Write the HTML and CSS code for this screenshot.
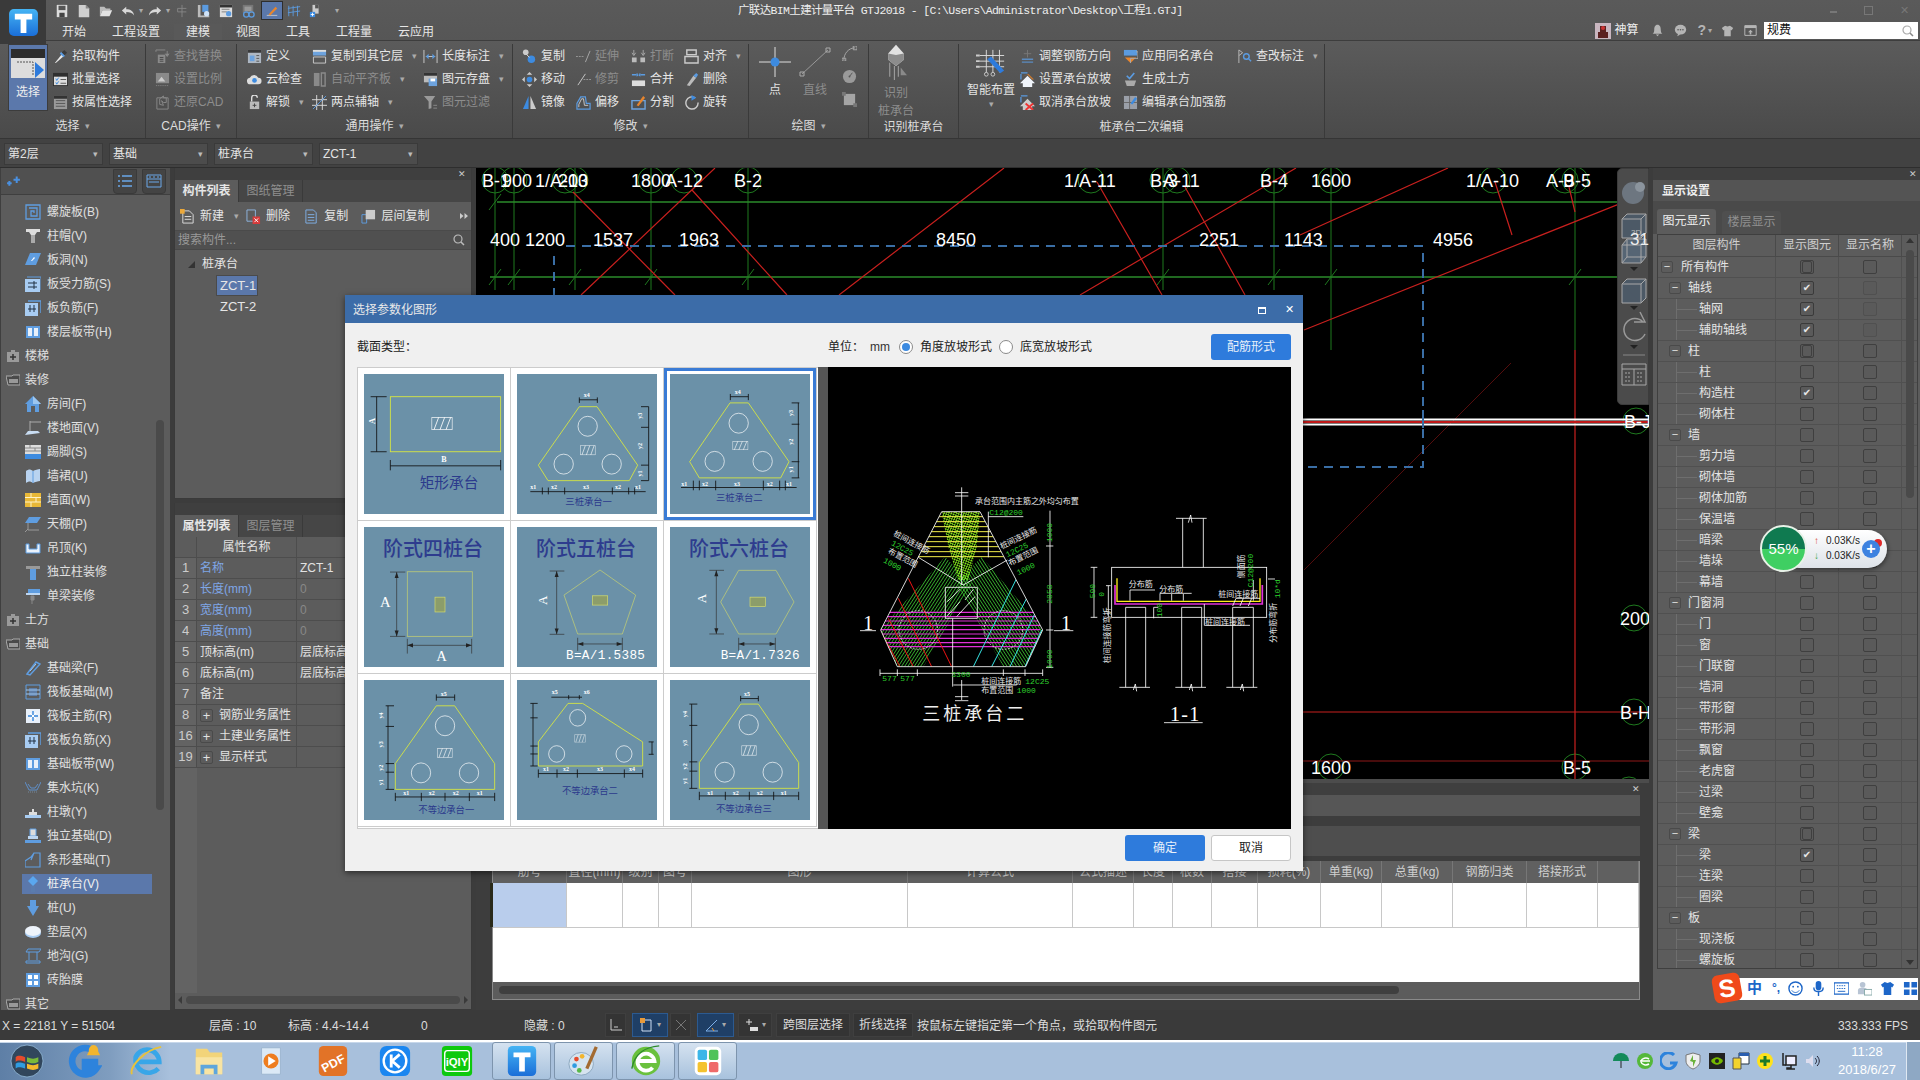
FILE: index.html
```html
<!DOCTYPE html>
<html lang="zh-CN">
<head>
<meta charset="utf-8">
<title>广联达BIM土建计量平台 GTJ2018</title>
<link rel="stylesheet" href="styles.css">
</head>
<body>
<svg class="sprite" aria-hidden="true">
<defs>
<pattern id="pgreen" width="8" height="8" patternUnits="userSpaceOnUse" patternTransform="rotate(33)"><path d="M0 0V8" stroke="#46e03a" stroke-width="4"/></pattern>
<pattern id="pgreen2" width="8" height="8" patternUnits="userSpaceOnUse" patternTransform="rotate(-33)"><path d="M0 0V8" stroke="#46e03a" stroke-width="4"/></pattern>
<pattern id="plime" width="7" height="7" patternUnits="userSpaceOnUse" patternTransform="rotate(20)"><path d="M0 0V7M0 0H7" stroke="#8dff1c" stroke-width="3.500"/></pattern>
<clipPath id="hexclip"><path d="M245 125H360L548 480 497 590H112L62 480Z"/></clipPath>
<linearGradient id="gq" x1="0" y1="0" x2="0" y2="1"><stop offset="0" stop-color="#45b4f4"/><stop offset="1" stop-color="#1a6ed8"/></linearGradient>
</defs>
<symbol id="hr" viewBox="0 0 64 38" preserveAspectRatio="none"><path d="M1 1H63V37H1ZM8 37L22 1M26 37L40 1M44 37L58 1" fill="none" stroke="#fff" stroke-width="2.5"/></symbol>
<!-- quick access -->
<symbol id="q-save" viewBox="0 0 16 16"><path d="M2 1H14V15H2Z" fill="#ddd"/><path d="M4 2H12V7H4Z" fill="#555"/><path d="M5 10H11V15H5Z" fill="#444"/></symbol>
<symbol id="q-new" viewBox="0 0 16 16"><path d="M2 1H10L14 5V15H2Z" fill="#cfcfcf"/><path d="M10 1V5H14Z" fill="#888"/></symbol>
<symbol id="q-open" viewBox="0 0 16 16"><path d="M1 3H6L8 5H13V7H4L1 14Z" fill="#bbb"/><path d="M4 7H15L12 14H1Z" fill="#e2e2e2"/></symbol>
<symbol id="q-undo" viewBox="0 0 16 16"><path d="M6 3V6C11 6 14 8 15 13 13 10 10 9 6 9V12L1 7.500Z" fill="#d8d8d8"/></symbol>
<symbol id="q-redo" viewBox="0 0 16 16"><path d="M10 3V6C5 6 2 8 1 13 3 10 6 9 10 9V12L15 7.500Z" fill="#d8d8d8"/></symbol>
<symbol id="q-tree" viewBox="0 0 16 16"><path d="M8 1V15M3 5H13M3 5V9H13" fill="none" stroke="#888"/></symbol>
<symbol id="q-a" viewBox="0 0 16 16"><path d="M1 1H4V13H14V15H1Z" fill="#bbb"/><path d="M6 1H13V9H6Z" fill="#5b9be0"/><circle cx="11" cy="11" r="3" fill="#cfe2f7"/></symbol>
<symbol id="q-b" viewBox="0 0 16 16"><path d="M1 1H15V15H1Z" fill="#ddd"/><path d="M1 1H15V4H1Z" fill="#333"/><path d="M3 6H12M3 9H9" stroke="#777"/><circle cx="11" cy="11" r="3" fill="#5b9be0"/></symbol>
<symbol id="q-c" viewBox="0 0 16 16"><path d="M2 1H14V10H2Z" fill="#777"/><path d="M4 3H12V8H4Z" fill="#999"/><circle cx="6" cy="12" r="3" fill="none" stroke="#5b9be0" stroke-width="1.500"/><circle cx="12" cy="12" r="3" fill="none" stroke="#5b9be0" stroke-width="1.500"/></symbol>
<symbol id="q-d" viewBox="0 0 16 16"><path d="M2 13H14" stroke="#ccc"/><path d="M4 12L12 3 14 5 6 13Z" fill="#e8852d"/></symbol>
<symbol id="q-e" viewBox="0 0 16 16"><path d="M2 2V14M7 2V14M12 2V14M1 5L15 3M1 10L15 8" fill="none" stroke="#5b9be0"/></symbol>
<symbol id="q-f" viewBox="0 0 16 16"><path d="M4 1H11V11H4Z" fill="#ccc"/><path d="M7 1H11V5H7Z" fill="#555"/><path d="M1 9H7V15H1Z" fill="#3d8be0"/><path d="M4 10V14M2 12H6" stroke="#fff"/></symbol>
<!-- ribbon -->
<symbol id="r-pick" viewBox="0 0 16 16"><path d="M2 15L9 6 11 8 3 15Z" fill="#e8e8e8"/><path d="M9 4L12 1 15 4 12 7Z" fill="#3b3b3b"/><path d="M8 4L12 8" stroke="#5b9be0" stroke-width="2"/></symbol>
<symbol id="r-batch" viewBox="0 0 16 16"><path d="M0 1H16V15H0Z" fill="#2f2f2f"/><path d="M1 5H15V14H1Z" fill="#ddd"/><path d="M3 7L4 9 6 6M3 11L4 13 6 10" fill="none" stroke="#3d8be0"/><path d="M8 8H14M8 12H14" stroke="#555"/></symbol>
<symbol id="r-prop" viewBox="0 0 16 16"><path d="M1 1H15V15H1Z" fill="#9a9a9a"/><path d="M1 1H15V4H1Z" fill="#333"/><path d="M3 6H13M3 9H13M3 12H13" stroke="#555"/></symbol>
<symbol id="r-find" viewBox="0 0 16 16"><path d="M3 6H11V15H3Z" fill="#8a8a8a"/><path d="M5 9H9M5 11H9M5 13H9" stroke="#444"/><path d="M1 3V1H11" fill="none" stroke="#8a8a8a"/><path d="M13 2V6M11 5L13 8 15 5" fill="#8a8a8a" stroke="#8a8a8a"/></symbol>
<symbol id="r-scale" viewBox="0 0 16 16"><path d="M1 1H15V12H1Z" fill="#8a8a8a"/><path d="M3 10L7 5 11 10Z" fill="#ccc"/><path d="M1 14.500H15" stroke="#8a8a8a" stroke-dasharray="1 1"/></symbol>
<symbol id="r-cad" viewBox="0 0 16 16"><path d="M2 3H14V15H2Z" fill="none" stroke="#8a8a8a"/><path d="M5 4L9 1V3H12V8H9L7 6 9 11 5 10Z" fill="none" stroke="#8a8a8a"/></symbol>
<symbol id="r-def" viewBox="0 0 16 16"><path d="M1 1H15V15H1Z" fill="#aeb7c2"/><path d="M1 1H15V4H1Z" fill="#3a3a3a"/><path d="M3 7H8V13H3Z" fill="#6da3de"/><path d="M10 7H13M10 10H13M10 13H13" stroke="#555"/></symbol>
<symbol id="r-cloud" viewBox="0 0 16 16"><path d="M4 13A3.500 3.500 0 0 1 3 6 5 5 0 0 1 12 6 3.500 3.500 0 0 1 12 13Z" fill="#ddd"/><circle cx="8" cy="9" r="2.500" fill="#3d8be0"/></symbol>
<symbol id="r-lock" viewBox="0 0 16 16"><path d="M3 7H13V15H3Z" fill="#bbb"/><path d="M5 7V3A3 3 0 0 1 11 3" fill="none" stroke="#ddd" stroke-width="1.500"/><path d="M8 9V13M6 11H10" stroke="#444"/></symbol>
<symbol id="r-copylayer" viewBox="0 0 16 16"><path d="M1 1H15V7H1Z" fill="#6da3de"/><path d="M1 1H15V3H1Z" fill="#ddd"/><path d="M1.500 8.500H14.500V15H1.500Z" fill="none" stroke="#ccc"/></symbol>
<symbol id="r-auto" viewBox="0 0 16 16"><path d="M2 1H8V15H2Z" fill="#8a8a8a"/><path d="M10 1H14V15H10Z" fill="none" stroke="#8a8a8a" stroke-width="1.500"/></symbol>
<symbol id="r-axis" viewBox="0 0 16 16"><path d="M0 5H16M0 11H16M5 0V16M11 0V16" stroke="#ddd"/><path d="M1 15L15 1" stroke="#5b9be0"/></symbol>
<symbol id="r-len" viewBox="0 0 16 16"><path d="M1 1V15M15 1V15M3 8H13" stroke="#ccc"/><path d="M3 8L6 5V11ZM13 8L10 5V11Z" fill="#5b9be0"/></symbol>
<symbol id="r-store" viewBox="0 0 16 16"><path d="M1 1H15V11H1Z" fill="#bbb"/><path d="M1 1H15V4H1Z" fill="#333"/><path d="M6 7H15V15H6Z" fill="#6da3de"/><path d="M8 7H13V10H8Z" fill="#fff"/></symbol>
<symbol id="r-filter" viewBox="0 0 16 16"><path d="M1 1H13L9 7V14L6 15V7Z" fill="#9a9a9a"/><path d="M11 11H15M11 14H15" stroke="#8a8a8a"/></symbol>
<symbol id="r-copy" viewBox="0 0 16 16"><circle cx="4" cy="3.500" r="3" fill="#ccc"/><circle cx="10" cy="11" r="4" fill="#3d8be0"/><path d="M5 6L8 9" stroke="#ddd"/></symbol>
<symbol id="r-move" viewBox="0 0 16 16"><path d="M8 0L11 3H5ZM8 16L5 13H11ZM0 8L3 5V11ZM16 8L13 11V5Z" fill="#ccc"/><circle cx="8" cy="8" r="3" fill="#3d8be0"/></symbol>
<symbol id="r-mirror" viewBox="0 0 16 16"><path d="M1 15L7 1V15Z" fill="#3d8be0"/><path d="M9 1L15 15H9Z" fill="#ccc"/></symbol>
<symbol id="r-ext" viewBox="0 0 16 16"><path d="M0 8H8" stroke="#999" stroke-dasharray="2 1"/><path d="M10 14L15 2" stroke="#aaa"/></symbol>
<symbol id="r-trim" viewBox="0 0 16 16"><path d="M8 8H16" stroke="#999" stroke-dasharray="2 1"/><path d="M2 14L10 2" stroke="#ccc"/></symbol>
<symbol id="r-off" viewBox="0 0 16 16"><path d="M1 15V9L5 2H10L11 9H15V15Z" fill="none" stroke="#5b9be0" stroke-width="1.300"/><path d="M3 13V10L6 4H8L9 11H13" fill="none" stroke="#ccc"/></symbol>
<symbol id="r-brk" viewBox="0 0 16 16"><path d="M1 9H6V14H1ZM10 9H15V14H10Z" fill="#bbb"/><path d="M3 1V6M1 4L3 7 5 4M13 1V6M11 4L13 7 15 4" fill="none" stroke="#aaa"/></symbol>
<symbol id="r-mrg" viewBox="0 0 16 16"><path d="M1 9H15V15H1Z" fill="#ddd"/><path d="M1 3H6M10 3H15" stroke="#5b9be0" stroke-width="1.500"/><path d="M6 1L9 3 6 5ZM10 1L7 3 10 5Z" fill="#5b9be0"/></symbol>
<symbol id="r-spl" viewBox="0 0 16 16"><path d="M1 6H15V15H1Z" fill="none" stroke="#6da3de" stroke-width="1.500"/><path d="M6 11L13 1 15 3 8 12Z" fill="#e8852d"/></symbol>
<symbol id="r-aln" viewBox="0 0 16 16"><path d="M3 1H13V6H3ZM1 8H15V15H1Z" fill="none" stroke="#ccc" stroke-width="1.500"/></symbol>
<symbol id="r-del" viewBox="0 0 16 16"><path d="M3 14L10 4 13 6 6 15Z" fill="#bbb"/><path d="M10 4L13 1 15 3 13 6Z" fill="#5b9be0"/></symbol>
<symbol id="r-rot" viewBox="0 0 16 16"><path d="M12 3A6.500 6.500 0 1 0 15 8" fill="none" stroke="#ccc" stroke-width="1.500"/><path d="M8 0L13 3 8 6Z" fill="#3d8be0"/></symbol>
<symbol id="r-pt" viewBox="0 0 32 30"><path d="M16 0V30M0 15H32" stroke="#ddd"/><circle cx="16" cy="15" r="4.500" fill="#3d8be0"/></symbol>
<symbol id="r-line" viewBox="0 0 32 30"><path d="M3 27L29 3" stroke="#999"/><path d="M1 25H5V29H1ZM27 1H31V5H27Z" fill="none" stroke="#aaa"/></symbol>
<symbol id="r-arc" viewBox="0 0 16 16"><path d="M2 15C2 8 7 2 14 2" fill="none" stroke="#aaa"/><path d="M12 0H16V4H12ZM0 13H4V16H0Z" fill="none" stroke="#aaa"/></symbol>
<symbol id="r-clk" viewBox="0 0 16 16"><circle cx="8" cy="8" r="7" fill="#9a9a9a"/><path d="M8 8L11 4" stroke="#555"/><circle cx="8" cy="8" r="1" fill="#555"/></symbol>
<symbol id="r-box" viewBox="0 0 16 16"><path d="M2 2H14V14H2Z" fill="#a5a5a5"/><path d="M0 0H4V4H0ZM12 12H16V16H12Z" fill="#777"/></symbol>
<symbol id="r-id" viewBox="0 0 32 46"><path d="M16 1L26 12V20L16 28 6 20V12Z" fill="#e2e2e2"/><path d="M6 20L16 28V14L6 12ZM16 14V28L26 20V12Z" fill="#8c8c8c"/><path d="M8 24V42M14 28V46M19 28V42" stroke="#9a9a9a" stroke-width="1.500"/><path d="M22 30L30 40H22Z" fill="#8a8a8a"/></symbol>
<symbol id="r-smart" viewBox="0 0 32 32"><path d="M4 8H30M4 14H30M4 20H30M11 2V26M18 2V26M25 2V26" stroke="#ddd"/><path d="M0 8H4M0 14H4M0 20H4" stroke="#ccc" stroke-width="2"/><path d="M12 12L26 27 30 24 16 9Z" fill="#2e7bdc"/><circle cx="11" cy="28" r="2" fill="none" stroke="#ccc"/><circle cx="18" cy="28" r="2" fill="none" stroke="#ccc"/></symbol>
<symbol id="z-adj" viewBox="0 0 16 16"><path d="M8 1V9M4 5H12" stroke="#777"/><path d="M2 11H14M2 14H14" stroke="#5b8bc0" stroke-width="1.500"/></symbol>
<symbol id="z-set" viewBox="0 0 16 16"><path d="M1 2V8M1 1H8" stroke="#5b9be0" stroke-width="1.300"/><path d="M2 5L9 2 15 8H13L8 3Z" fill="#c9792f"/><path d="M8 4L16 12H13V16H3V12H0Z" fill="#f0f4fa"/></symbol>
<symbol id="z-can" viewBox="0 0 16 16"><path d="M1 2V8M1 1H8" stroke="#5b9be0" stroke-width="1.300"/><path d="M8 4L16 12H13V16H3V12H0Z" fill="#ccc"/><path d="M6 9L14 16M14 9L6 16" stroke="#e33" stroke-width="2"/></symbol>
<symbol id="z-app" viewBox="0 0 16 16"><path d="M1 1H15V7H1Z" fill="#5b9be0"/><path d="M2 9H14L8 15Z" fill="#e8852d"/><path d="M14 3H16V10H8V15" fill="none" stroke="#aaa"/></symbol>
<symbol id="z-earth" viewBox="0 0 16 16"><path d="M2 9H14L12 15H4Z" fill="#aaa"/><path d="M4 4L7 7 12 1" fill="none" stroke="#5b9be0" stroke-width="1.800"/></symbol>
<symbol id="z-edit" viewBox="0 0 16 16"><path d="M1 1H15V15H1Z" fill="#9a9fa8"/><path d="M7 1V15M1 8H15" stroke="#666"/><path d="M8 9L13 2 15 4 10 10Z" fill="#3d8be0"/></symbol>
<symbol id="z-chk" viewBox="0 0 16 16"><path d="M2 1V15M2 1L6 4 2 7" fill="none" stroke="#bbb"/><circle cx="10" cy="8" r="3" fill="none" stroke="#5b9be0" stroke-width="1.500"/><path d="M12 10L15 13" stroke="#5b9be0" stroke-width="1.500"/></symbol>
<!-- nav -->
<symbol id="n-spi" viewBox="0 0 16 16"><path d="M1 1H15V15H1ZM4 4H12V12H6V7H9V9" fill="none" stroke="#5f9de0" stroke-width="1.300"/></symbol>
<symbol id="n-cap" viewBox="0 0 16 16"><path d="M1 1H15V4H12L10 7H6L4 4H1Z" fill="#ddd"/><path d="M6 7H10V15H6Z" fill="#aaa"/></symbol>
<symbol id="n-hole" viewBox="0 0 16 16"><path d="M5 1H16L11 13H0Z" fill="#5f9de0"/><path d="M6 9L9 5 10 6 7 9Z" fill="#fff"/></symbol>
<symbol id="n-reb" viewBox="0 0 16 16"><path d="M0 3H15V16H0Z" fill="#a8ccf2"/><path d="M2 1H16V14" fill="none" stroke="#5f9de0"/><path d="M3 7H12M3 11H12M9 5V13" stroke="#234"/></symbol>
<symbol id="n-neg" viewBox="0 0 16 16"><path d="M0 3H13V16H0Z" fill="#a8ccf2"/><path d="M3 1H16V13" fill="none" stroke="#5f9de0" stroke-width="1.500"/><path d="M3 9H11M5 5V12M9 5V12" stroke="#234"/></symbol>
<symbol id="n-str" viewBox="0 0 16 16"><path d="M1 2H15V14H1Z" fill="#5f9de0"/><path d="M3 4H7V12H3ZM9 4H13V12H9Z" fill="#e8f0fa"/></symbol>
<symbol id="n-fc" viewBox="0 0 14 14"><path d="M1 3H5V1H9V3H13V13H1Z" fill="#9a9a9a"/><path d="M7 5V11M4 8H10" stroke="#333" stroke-width="1.500"/></symbol>
<symbol id="n-fo" viewBox="0 0 14 14"><path d="M0 3H6L7 2H14V12H2Z" fill="#4a4a4a" stroke="#aaa"/><path d="M3 6H12V10H3Z" fill="#999"/></symbol>
<symbol id="n-home" viewBox="0 0 16 16"><path d="M8 0L16 8H14V16H10V10H6V16H2V8H0Z" fill="#5f9de0"/><path d="M8 0L16 8H8Z" fill="#9cc6f0"/></symbol>
<symbol id="n-flr" viewBox="0 0 16 16"><path d="M5 1V12M5 2H16" stroke="#aaa"/><path d="M3 11H13L15 13 0 15Z" fill="#c8dcf2"/></symbol>
<symbol id="n-skt" viewBox="0 0 16 16"><path d="M0 1H16V10H0Z" fill="#ddd"/><path d="M0 4H16M0 7H16M5 1V4M10 4V7" stroke="#888"/><path d="M0 10H16V15H0Z" fill="#3d8be0"/></symbol>
<symbol id="n-cur" viewBox="0 0 16 16"><path d="M1 3C4 1 5 1 8 3 10 2 13 1 15 1V13C13 13 10 14 8 15 5 13 4 13 1 15Z" fill="#b9d3f0"/><path d="M8 3V15" stroke="#5f9de0"/></symbol>
<symbol id="n-wal" viewBox="0 0 16 16"><path d="M0 1H16V15H0Z" fill="#e8b838"/><path d="M0 5.500H16M0 10H16M6 1V5.500M11 5.500V10M6 10V15" stroke="#fff3c8"/></symbol>
<symbol id="n-cei" viewBox="0 0 16 16"><path d="M4 1H16L12 7H0Z" fill="#5f9de0"/><path d="M3 7V14H14M3 13L0 16" fill="none" stroke="#999"/></symbol>
<symbol id="n-sus" viewBox="0 0 16 16"><path d="M1 4H4V9H12V4H15V13H1Z" fill="#eaf2fb" stroke="#5f9de0"/></symbol>
<symbol id="n-col" viewBox="0 0 16 16"><path d="M1 2H15V5H1Z" fill="#999"/><path d="M5 5H11V16H5Z" fill="#5f9de0"/></symbol>
<symbol id="n-bem" viewBox="0 0 16 16"><path d="M3 1H15V5H3Z" fill="#5f9de0"/><path d="M1 5H15V7H1Z" fill="#bcd6f2"/><path d="M6 8H9V12H6ZM7 12V16" fill="#888" stroke="#888"/></symbol>
<symbol id="n-fbe" viewBox="0 0 16 16"><path d="M2 14L11 2 15 4 5 15Z" fill="none" stroke="#5f9de0" stroke-width="1.500"/><path d="M5 11L11 4" stroke="#a8ccf2"/></symbol>
<symbol id="n-raf" viewBox="0 0 16 16"><path d="M1 1H15V15H1Z" fill="none" stroke="#5f9de0"/><path d="M4 4H12V12H4Z" fill="#5f7fa8"/><path d="M1 6H15M1 10H15" stroke="#9cc6f0"/></symbol>
<symbol id="n-rmn" viewBox="0 0 16 16"><path d="M1 1H15V15H1Z" fill="#e8f0fa"/><path d="M8 3V13M3 8H13" stroke="#5f9de0" stroke-width="1.800"/><path d="M5 5L11 11M11 5L5 11" stroke="#fff"/></symbol>
<symbol id="n-pit" viewBox="0 0 16 16"><path d="M0 2L4 10 12 10 16 2M3 4L6 8H10L13 4" fill="none" stroke="#5f8fc8"/><path d="M3 12H13" stroke="#789" stroke-dasharray="1 1"/></symbol>
<symbol id="n-ped" viewBox="0 0 16 16"><path d="M0 11H16V14H0Z" fill="#a8ccf2"/><path d="M4 8H12V11H4ZM7 5H9V8H7Z" fill="#ddd"/></symbol>
<symbol id="n-ind" viewBox="0 0 16 16"><path d="M5 1H11V8H5Z" fill="#ddd" stroke="#5f9de0"/><path d="M3 8H13V11H3Z" fill="#bcd6f2"/><path d="M0 12H16V15H0Z" fill="#5f9de0"/></symbol>
<symbol id="n-strp" viewBox="0 0 16 16"><path d="M0 15V9L6 5 9 1H15V15ZM9 1L6 8" fill="none" stroke="#5f9de0" stroke-width="1.200"/></symbol>
<symbol id="n-cap2" viewBox="0 0 16 16"><path d="M8 0L13 5 8 10 3 5Z" fill="#5aa7ef"/><path d="M6 10H10V16H6Z" fill="#5a7cae"/></symbol>
<symbol id="n-pile" viewBox="0 0 16 16"><path d="M5 0H11V6H14L8 16 2 6H5Z" fill="#5f9de0"/></symbol>
<symbol id="n-pad" viewBox="0 0 16 16"><ellipse cx="8" cy="9" rx="8" ry="5" fill="#a8ccf2"/><ellipse cx="8" cy="7" rx="8" ry="5" fill="#eef4fb"/></symbol>
<symbol id="n-dit" viewBox="0 0 16 16"><path d="M3 1H16L14 4H1ZM4 4V12M12 4V12M1 13H15V15H1Z" fill="none" stroke="#5f9de0"/></symbol>
<symbol id="n-bri" viewBox="0 0 16 16"><path d="M1 1H15V15H1Z" fill="#5f9de0"/><path d="M3 3H7V7H3ZM9 3H13V7H9ZM3 9H7V13H3ZM9 9H13V13H9Z" fill="#fff"/></symbol>
<!-- taskbar -->
<symbol id="t-win" viewBox="0 0 36 36"><circle cx="18" cy="18" r="17" fill="#31465c" stroke="#8bb0d0"/><path d="M6 14C8 12 11 12 16 14V19C11 17 8 17 6 19Z" fill="#e54b2c"/><path d="M18 14C23 16 26 16 30 14V19C26 21 23 21 18 19Z" fill="#7ab93a"/><path d="M6 21C8 19 11 19 16 21V26C11 24 8 24 6 26Z" fill="#2f9ce0"/><path d="M18 21C23 23 26 23 30 21V26C26 28 23 28 18 26Z" fill="#f4b92c"/></symbol>
<symbol id="t-q" viewBox="0 0 36 36"><path d="M28 8A14 14 0 1 0 30 26H18V19H32" fill="none" stroke="#2d83dc" stroke-width="7"/><path d="M27 1A5 6 0 0 1 32 8L34 12H20L22 8A5 6 0 0 1 27 1Z" fill="#f2b52e"/></symbol>
<symbol id="t-ie" viewBox="0 0 36 36"><path d="M5 19H31A13 13 0 0 0 6 14 14 14 0 0 0 30 26" fill="none" stroke="#38a6e8" stroke-width="5"/><path d="M2 32C-1 24 16 6 33 3" fill="none" stroke="#e8c23a" stroke-width="2"/></symbol>
<symbol id="t-fo" viewBox="0 0 36 36"><path d="M4 5H16L19 9H32V32H4Z" fill="#f2d47a"/><path d="M4 14H32V32H4Z" fill="#f8e4a3"/><path d="M9 22H27V32H23V26H13V32H9Z" fill="#5ea6dc"/></symbol>
<symbol id="t-pl" viewBox="0 0 36 36"><path d="M8 4H28V32H8Z" fill="#dbe9f6" stroke="#9cb6d0"/><circle cx="18" cy="18" r="8" fill="#ee7d1f"/><path d="M15 13L23 18 15 23Z" fill="#fff"/></symbol>
<symbol id="t-pdf" viewBox="0 0 36 36"><rect x="3" y="2" width="30" height="32" rx="5" fill="#e27327"/><text x="18" y="25" class="tpdf" transform="rotate(-28 18 20)">PDF</text></symbol>
<symbol id="t-k" viewBox="0 0 36 36"><rect x="2" y="2" width="32" height="32" rx="7" fill="#1a86f0"/><circle cx="18" cy="18" r="12" fill="none" stroke="#fff" stroke-width="2.500"/><path d="M14 11V25M23 11L15 18 23 25" fill="none" stroke="#fff" stroke-width="3"/></symbol>
<symbol id="t-iq" viewBox="0 0 36 36"><rect x="2" y="2" width="32" height="32" rx="4" fill="#0ec90e"/><rect x="5" y="7" width="26" height="22" rx="3" fill="none" stroke="#fff" stroke-width="1.500"/><text x="18" y="23" class="tiq">iQIY</text></symbol>
<symbol id="t-t" viewBox="0 0 36 36"><rect x="3" y="2" width="30" height="32" rx="5" fill="url(#gq)"/><path d="M9 9H27V14H21V29H15V14H9Z" fill="#fff"/></symbol>
<symbol id="t-pa" viewBox="0 0 36 36"><ellipse cx="15" cy="21" rx="13" ry="12" fill="#d6e4ef" stroke="#8ba7bf"/><circle cx="10" cy="16" r="2.500" fill="#e54b2c"/><circle cx="16" cy="13" r="2.500" fill="#f2b52e"/><circle cx="8" cy="23" r="2.500" fill="#2f9ce0"/><circle cx="13" cy="28" r="2.500" fill="#58b848"/><path d="M21 26L31 3" stroke="#a36a30" stroke-width="3.500"/></symbol>
<symbol id="t-e" viewBox="0 0 36 36"><circle cx="18" cy="18" r="15" fill="#6ac13d"/><path d="M9 18H27A9 9 0 1 0 25 25" fill="none" stroke="#fff" stroke-width="4"/><path d="M3 26C6 10 18 3 32 2" fill="none" stroke="#2d8a2d" stroke-width="1.500"/></symbol>
<symbol id="t-ap" viewBox="0 0 36 36"><rect x="4" y="3" width="28" height="30" rx="5" fill="#fff"/><rect x="7" y="6" width="10" height="11" rx="2" fill="#3bb6e8"/><rect x="19" y="6" width="10" height="11" rx="2" fill="#4fc35a"/><rect x="7" y="19" width="10" height="11" rx="2" fill="#f4c22e"/><rect x="19" y="19" width="10" height="11" rx="2" fill="#ef6a6a"/></symbol>
<symbol id="s-um" viewBox="0 0 18 18"><path d="M1 9A8 8 0 0 1 17 9Z" fill="#138a5a"/><path d="M9 9V16" stroke="#222"/></symbol>
<symbol id="s-e" viewBox="0 0 18 18"><circle cx="9" cy="9" r="8" fill="#55b83a"/><path d="M4 9H14M5 9A5 4 0 0 1 13 7M5 10A5 4 0 0 0 13 12" fill="none" stroke="#fff" stroke-width="1.500"/></symbol>
<symbol id="s-q" viewBox="0 0 18 18"><path d="M14 3A8 8 0 1 0 16 11H10" fill="none" stroke="#2d83dc" stroke-width="3"/></symbol>
<symbol id="s-sh" viewBox="0 0 18 18"><path d="M9 1L16 3V9C16 13 12 16 9 17 6 16 2 13 2 9V3Z" fill="#eee" stroke="#777"/><path d="M6 9L9 3V8H12L9 15V10Z" fill="#6ab23a"/></symbol>
<symbol id="s-nv" viewBox="0 0 18 18"><rect x="1" y="1" width="16" height="16" fill="#222"/><path d="M3 9C6 4 12 4 15 9 12 14 6 14 3 9Z" fill="#76b900"/><circle cx="9" cy="9" r="2" fill="#222"/></symbol>
<symbol id="s-ye" viewBox="0 0 18 18"><path d="M7 1H17V12H7Z" fill="#fff" stroke="#234"/><path d="M7 1H17V4H7Z" fill="#2b5fb0"/><path d="M1 6H9V17H1Z" fill="#f2d32e" stroke="#555"/></symbol>
<symbol id="s-pl" viewBox="0 0 18 18"><circle cx="9" cy="9" r="8" fill="#ffe21c"/><path d="M9 4V14M4 9H14" stroke="#1d7a2a" stroke-width="3"/></symbol>
<symbol id="s-nt" viewBox="0 0 18 18"><path d="M6 4H16V13H6Z" fill="#eef" stroke="#222" stroke-width="1.500"/><path d="M3 1V13H6M11 13V16H7V17H15" fill="none" stroke="#222" stroke-width="1.500"/></symbol>
<symbol id="s-sp" viewBox="0 0 18 18"><path d="M2 7H5L9 3V15L5 11H2Z" fill="#dde"/><path d="M11 6C13 8 13 10 11 12M13 4C16 7 16 11 13 14" fill="none" stroke="#223"/></symbol>
</svg>

<div class="app">
  <header class="hdr">
    <div class="logo-box">
      <svg class="logo" viewBox="0 0 30 28"><rect width="30" height="28" rx="5" fill="url(#gq)"/><path d="M6 5H24V11H18V25H12V11H6Z" fill="#fff"/></svg>
    </div>
    <div class="hdr-main">
      <div class="qat">
        <svg class="qi"><use href="#q-save"/></svg><svg class="qi"><use href="#q-new"/></svg><svg class="qi"><use href="#q-open"/></svg>
        <svg class="qi q-sm"><use href="#q-undo"/></svg><span class="car">▾</span><svg class="qi q-sm"><use href="#q-redo"/></svg><span class="car">▾</span>
        <svg class="qi"><use href="#q-tree"/></svg><svg class="qi"><use href="#q-a"/></svg><svg class="qi"><use href="#q-b"/></svg><svg class="qi"><use href="#q-c"/></svg>
        <span class="qon"><svg class="qi"><use href="#q-d"/></svg></span><svg class="qi"><use href="#q-e"/></svg><svg class="qi"><use href="#q-f"/></svg><span class="car">▾</span>
      </div>
      <nav class="tabs">
        <span class="tab">开始</span><span class="tab">工程设置</span><span class="tab on">建模</span><span class="tab">视图</span><span class="tab">工具</span><span class="tab">工程量</span><span class="tab">云应用</span>
      </nav>
    </div>
    <div class="title">广联达BIM土建计量平台 GTJ2018 - [C:\Users\Administrator\Desktop\工程1.GTJ]</div>
    <div class="hdr-right">
      <div class="winctl"><span class="wmin"></span><span class="wres"></span><span class="wcl">✕</span></div>
      <div class="user">
        <svg class="avatar" viewBox="0 0 16 16"><rect width="16" height="16" fill="#c9b6c0"/><path d="M5 3H11V9H13V15H3V9H5Z" fill="#5b2020"/><circle cx="8" cy="5" r="2" fill="#c33"/></svg>
        <span class="uname">神算</span>
        <svg class="ui" viewBox="0 0 16 16"><path d="M8 1C11 1 12 4 12 7S13 11 14 12H2C3 11 4 10 4 7S5 1 8 1ZM6 13H10L8 15Z" fill="#b5b5b5"/></svg>
        <svg class="ui" viewBox="0 0 16 16"><ellipse cx="8" cy="7" rx="7" ry="6" fill="#b5b5b5"/><path d="M5 12L4 15 8 13Z" fill="#b5b5b5"/><circle cx="5" cy="7" r="1" fill="#555"/><circle cx="8" cy="7" r="1" fill="#555"/><circle cx="11" cy="7" r="1" fill="#555"/></svg>
        <span class="uq">?</span><span class="car">▾</span>
        <svg class="ui" viewBox="0 0 16 16"><path d="M5 2L8 3 11 2 15 5 13 8 12 7V15H4V7L3 8 1 5Z" fill="#b5b5b5"/></svg>
        <svg class="ui" viewBox="0 0 16 16"><path d="M1 2H15V14H1Z" fill="none" stroke="#b5b5b5" stroke-width="1.200"/><path d="M1 2H15V5H1Z" fill="#b5b5b5"/><path d="M8 7L11 10H9V13H7V10H5Z" fill="#b5b5b5"/></svg>
        <div class="srch"><span>规费</span><svg class="srch-i" viewBox="0 0 12 12"><circle cx="5" cy="5" r="4" fill="none" stroke="#aaa" stroke-width="1.200"/><path d="M8 8L11 11" stroke="#888" stroke-width="1.500"/></svg></div>
      </div>
    </div>
  </header>

  <section class="ribbon">
    <div class="rg g1">
      <div class="rb">
        <div class="bigsel">
          <svg class="bigsel-i" viewBox="0 0 34 29"><path d="M0 0H34V29H0Z" fill="#ddd"/><path d="M0 0H34V9H0Z" fill="#2c2c2c"/><path d="M6 13H22V27" fill="none" stroke="#555" stroke-dasharray="2 1"/><path d="M24 13L33 21 24 29Z" fill="#2e7bdc"/></svg>
          <span>选择</span>
        </div>
        <div class="rc c-a">
          <div class="ri"><svg class="ic15"><use href="#r-pick"/></svg>拾取构件</div>
          <div class="ri"><svg class="ic15"><use href="#r-batch"/></svg>批量选择</div>
          <div class="ri"><svg class="ic15"><use href="#r-prop"/></svg>按属性选择</div>
        </div>
      </div>
      <div class="rl">选择<span class="car">▾</span></div>
    </div>
    <div class="rg g2">
      <div class="rb">
        <div class="rc">
          <div class="ri off"><svg class="ic15"><use href="#r-find"/></svg>查找替换</div>
          <div class="ri off"><svg class="ic15"><use href="#r-scale"/></svg>设置比例</div>
          <div class="ri off"><svg class="ic15"><use href="#r-cad"/></svg>还原CAD</div>
        </div>
      </div>
      <div class="rl">CAD操作<span class="car">▾</span></div>
    </div>
    <div class="rg g3">
      <div class="rb">
        <div class="rc w65">
          <div class="ri"><svg class="ic15"><use href="#r-def"/></svg>定义</div>
          <div class="ri"><svg class="ic15"><use href="#r-cloud"/></svg>云检查</div>
          <div class="ri"><svg class="ic15"><use href="#r-lock"/></svg>解锁<span class="car">▾</span></div>
        </div>
        <div class="rc w111">
          <div class="ri"><svg class="ic15"><use href="#r-copylayer"/></svg>复制到其它层<span class="car">▾</span></div>
          <div class="ri off"><svg class="ic15"><use href="#r-auto"/></svg>自动平齐板<span class="car">▾</span></div>
          <div class="ri"><svg class="ic15"><use href="#r-axis"/></svg>两点辅轴<span class="car">▾</span></div>
        </div>
        <div class="rc">
          <div class="ri"><svg class="ic15"><use href="#r-len"/></svg>长度标注<span class="car">▾</span></div>
          <div class="ri"><svg class="ic15"><use href="#r-store"/></svg>图元存盘<span class="car">▾</span></div>
          <div class="ri off"><svg class="ic15"><use href="#r-filter"/></svg>图元过滤</div>
        </div>
      </div>
      <div class="rl">通用操作<span class="car">▾</span></div>
    </div>
    <div class="rg g4">
      <div class="rb">
        <div class="rc w54">
          <div class="ri"><svg class="ic15"><use href="#r-copy"/></svg>复制</div>
          <div class="ri"><svg class="ic15"><use href="#r-move"/></svg>移动</div>
          <div class="ri"><svg class="ic15"><use href="#r-mirror"/></svg>镜像</div>
        </div>
        <div class="rc w55">
          <div class="ri off"><svg class="ic15"><use href="#r-ext"/></svg>延伸</div>
          <div class="ri off"><svg class="ic15"><use href="#r-trim"/></svg>修剪</div>
          <div class="ri"><svg class="ic15"><use href="#r-off"/></svg>偏移</div>
        </div>
        <div class="rc w53">
          <div class="ri off"><svg class="ic15"><use href="#r-brk"/></svg>打断</div>
          <div class="ri"><svg class="ic15"><use href="#r-mrg"/></svg>合并</div>
          <div class="ri"><svg class="ic15"><use href="#r-spl"/></svg>分割</div>
        </div>
        <div class="rc">
          <div class="ri"><svg class="ic15"><use href="#r-aln"/></svg>对齐<span class="car">▾</span></div>
          <div class="ri"><svg class="ic15"><use href="#r-del"/></svg>删除</div>
          <div class="ri"><svg class="ic15"><use href="#r-rot"/></svg>旋转</div>
        </div>
      </div>
      <div class="rl">修改<span class="car">▾</span></div>
    </div>
    <div class="rg g5">
      <div class="rb">
        <div class="bigbtn b-pt"><svg class="big-i"><use href="#r-pt"/></svg><span>点</span></div>
        <div class="bigbtn b-ln off"><svg class="big-i"><use href="#r-line"/></svg><span>直线</span></div>
        <div class="mini3"><svg class="ic15"><use href="#r-arc"/></svg><svg class="ic15"><use href="#r-clk"/></svg><svg class="ic15"><use href="#r-box"/></svg></div>
      </div>
      <div class="rl">绘图<span class="car">▾</span></div>
    </div>
    <div class="rg g6">
      <div class="rb">
        <div class="bigbtn b-id off"><svg class="id-i"><use href="#r-id"/></svg><span>识别</span><span>桩承台</span></div>
      </div>
      <div class="rl">识别桩承台</div>
    </div>
    <div class="rg g7">
      <div class="rb">
        <div class="bigbtn b-sm"><svg class="sm-i"><use href="#r-smart"/></svg><span>智能布置</span><span class="car">▾</span></div>
        <div class="rc w103">
          <div class="ri"><svg class="ic15"><use href="#z-adj"/></svg>调整钢筋方向</div>
          <div class="ri"><svg class="ic15"><use href="#z-set"/></svg>设置承台放坡</div>
          <div class="ri"><svg class="ic15"><use href="#z-can"/></svg>取消承台放坡</div>
        </div>
        <div class="rc w114">
          <div class="ri"><svg class="ic15"><use href="#z-app"/></svg>应用同名承台</div>
          <div class="ri"><svg class="ic15"><use href="#z-earth"/></svg>生成土方</div>
          <div class="ri"><svg class="ic15"><use href="#z-edit"/></svg>编辑承台加强筋</div>
        </div>
        <div class="rc">
          <div class="ri"><svg class="ic15"><use href="#z-chk"/></svg>查改标注<span class="car">▾</span></div>
        </div>
      </div>
      <div class="rl">桩承台二次编辑</div>
    </div>
  </section>

  <section class="ddbar">
    <div class="dd">第2层<span class="car">▾</span></div>
    <div class="dd">基础<span class="car">▾</span></div>
    <div class="dd">桩承台<span class="car">▾</span></div>
    <div class="dd">ZCT-1<span class="car">▾</span></div>
  </section>

  <main class="main">
    <aside class="nav">
      <div class="nav-h">
        <svg class="nav-add" viewBox="0 0 14 12"><path d="M0 8H5M2.500 5.500V10.500M7 4H14M10.500 .5V7.500" stroke="#4a90e0" stroke-width="2.200"/></svg>
        <span class="nbtn"><svg viewBox="0 0 16 16" class="nb-i"><path d="M1 3H3M1 8H3M1 13H3M5 3H15M5 8H15M5 13H15" stroke="#6aa7e8" stroke-width="1.500"/></svg></span>
        <span class="nbtn"><svg viewBox="0 0 16 16" class="nb-i"><path d="M1 2H15V14H1ZM1 6H15M3 4H5M7 4H9M11 4H13M3 9H13" fill="none" stroke="#6aa7e8"/></svg></span>
      </div>
      <div class="nav-list">
        <div class="nv"><svg class="ic16"><use href="#n-spi"/></svg>螺旋板(B)</div>
        <div class="nv"><svg class="ic16"><use href="#n-cap"/></svg>柱帽(V)</div>
        <div class="nv"><svg class="ic16"><use href="#n-hole"/></svg>板洞(N)</div>
        <div class="nv"><svg class="ic16"><use href="#n-reb"/></svg>板受力筋(S)</div>
        <div class="nv"><svg class="ic16"><use href="#n-neg"/></svg>板负筋(F)</div>
        <div class="nv"><svg class="ic16"><use href="#n-str"/></svg>楼层板带(H)</div>
        <div class="nv g"><svg class="ic14"><use href="#n-fc"/></svg>楼梯</div>
        <div class="nv g"><svg class="ic14"><use href="#n-fo"/></svg>装修</div>
        <div class="nv"><svg class="ic16"><use href="#n-home"/></svg>房间(F)</div>
        <div class="nv"><svg class="ic16"><use href="#n-flr"/></svg>楼地面(V)</div>
        <div class="nv"><svg class="ic16"><use href="#n-skt"/></svg>踢脚(S)</div>
        <div class="nv"><svg class="ic16"><use href="#n-cur"/></svg>墙裙(U)</div>
        <div class="nv"><svg class="ic16"><use href="#n-wal"/></svg>墙面(W)</div>
        <div class="nv"><svg class="ic16"><use href="#n-cei"/></svg>天棚(P)</div>
        <div class="nv"><svg class="ic16"><use href="#n-sus"/></svg>吊顶(K)</div>
        <div class="nv"><svg class="ic16"><use href="#n-col"/></svg>独立柱装修</div>
        <div class="nv"><svg class="ic16"><use href="#n-bem"/></svg>单梁装修</div>
        <div class="nv g"><svg class="ic14"><use href="#n-fc"/></svg>土方</div>
        <div class="nv g"><svg class="ic14"><use href="#n-fo"/></svg>基础</div>
        <div class="nv"><svg class="ic16"><use href="#n-fbe"/></svg>基础梁(F)</div>
        <div class="nv"><svg class="ic16"><use href="#n-raf"/></svg>筏板基础(M)</div>
        <div class="nv"><svg class="ic16"><use href="#n-rmn"/></svg>筏板主筋(R)</div>
        <div class="nv"><svg class="ic16"><use href="#n-neg"/></svg>筏板负筋(X)</div>
        <div class="nv"><svg class="ic16"><use href="#n-str"/></svg>基础板带(W)</div>
        <div class="nv"><svg class="ic16"><use href="#n-pit"/></svg>集水坑(K)</div>
        <div class="nv"><svg class="ic16"><use href="#n-ped"/></svg>柱墩(Y)</div>
        <div class="nv"><svg class="ic16"><use href="#n-ind"/></svg>独立基础(D)</div>
        <div class="nv"><svg class="ic16"><use href="#n-strp"/></svg>条形基础(T)</div>
        <div class="nv sel"><svg class="ic16"><use href="#n-cap2"/></svg>桩承台(V)</div>
        <div class="nv"><svg class="ic16"><use href="#n-pile"/></svg>桩(U)</div>
        <div class="nv"><svg class="ic16"><use href="#n-pad"/></svg>垫层(X)</div>
        <div class="nv"><svg class="ic16"><use href="#n-dit"/></svg>地沟(G)</div>
        <div class="nv"><svg class="ic16"><use href="#n-bri"/></svg>砖胎膜</div>
        <div class="nv g"><svg class="ic14"><use href="#n-fo"/></svg>其它</div>
      </div>
      <div class="nav-thumb"></div>
    </aside>

    <section class="mid">
      <div class="pn pn-top">
        <div class="pn-bar"><span class="pn-x">✕</span></div>
        <div class="pn-tabs"><span class="pt on">构件列表</span><span class="pt">图纸管理</span></div>
        <div class="tb">
          <span class="tbi t1"><svg class="ic15" viewBox="0 0 16 16"><path d="M3 2H10L14 6V15H3Z" fill="none" stroke="#ddd"/><path d="M5 8H12M5 11H12" stroke="#ddd"/><rect x="0" y="0" width="5" height="5" fill="#eba83a"/></svg>新建<span class="car">▾</span></span>
          <span class="tbi t2"><svg class="ic15" viewBox="0 0 16 16"><path d="M1 1H10V13H1Z" fill="none" stroke="#8fb5e0"/><rect x="7" y="8" width="8" height="8" fill="#d63b3b"/><path d="M9 10L13 14M13 10L9 14" stroke="#fff"/></svg>删除</span>
          <span class="tbi t3"><svg class="ic15" viewBox="0 0 16 16"><path d="M2 1H10L13 4V15H2Z" fill="none" stroke="#7fb0e8"/><path d="M4 6H11M4 9H11M4 12H11" stroke="#7fb0e8"/></svg>复制</span>
          <span class="tbi t4"><svg class="ic15" viewBox="0 0 16 16"><path d="M1 6H6V15H1Z" fill="none" stroke="#5f9de0"/><path d="M5 1H15V11H5Z" fill="#ccc"/></svg>层间复制</span>
          <svg class="tb-more" viewBox="0 0 8 8"><path d="M0 1L3.500 4 0 7ZM4.500 1L8 4 4.500 7Z" fill="#ccc"/></svg>
        </div>
        <div class="sb"><span>搜索构件...</span><svg class="sb-i" viewBox="0 0 12 12"><circle cx="5" cy="5" r="4" fill="none" stroke="#bbb" stroke-width="1.200"/><path d="M8 8L11 11" stroke="#bbb" stroke-width="1.500"/></svg></div>
        <div class="tree">
          <div class="tr0"><span class="tri"></span>桩承台</div>
          <div class="tr1 on">ZCT-1</div>
          <div class="tr1">ZCT-2</div>
        </div>
      </div>
      <div class="pn pn-prop">
        <div class="pn-bar pb2"></div>
        <div class="pn-tabs"><span class="pt on">属性列表</span><span class="pt">图层管理</span></div>
        <div class="prop">
          <div class="pr ph"><span></span><span class="phn">属性名称</span><span></span></div>
          <div class="pr"><span>1</span><span class="bl">名称</span><span>ZCT-1</span></div>
          <div class="pr"><span>2</span><span class="bl">长度(mm)</span><span class="dv">0</span></div>
          <div class="pr"><span>3</span><span class="bl">宽度(mm)</span><span class="dv">0</span></div>
          <div class="pr"><span>4</span><span class="bl">高度(mm)</span><span class="dv">0</span></div>
          <div class="pr"><span>5</span><span>顶标高(m)</span><span>层底标高</span></div>
          <div class="pr"><span>6</span><span>底标高(m)</span><span>层底标高</span></div>
          <div class="pr"><span>7</span><span>备注</span><span></span></div>
          <div class="pr"><span>8</span><span><i class="plus">+</i>钢筋业务属性</span><span></span></div>
          <div class="pr"><span>16</span><span><i class="plus">+</i>土建业务属性</span><span></span></div>
          <div class="pr"><span>19</span><span><i class="plus">+</i>显示样式</span><span></span></div>
        </div>
        <div class="hs"><span class="hs-l"></span><span class="hs-t"></span><span class="hs-r"></span></div>
      </div>
    </section>

    <section class="center">
      <div class="canvas">
        <svg class="cv" viewBox="476 168 1173 611">
          <rect x="476" y="168" width="1173" height="611" fill="#000"/>
          <g class="gl">
            <path d="M495 168V290M514 168V290M575 168V290M651 168V290M748 168V290M1163 168V290M1274 168V290M1331 168V350M1575 168V350"/>
            <path class="gb" d="M497 202H1649M490 277H1649"/>
            <path d="M489 285L501 269M508 285L520 269M569 285L581 269M645 285L657 269M742 285L754 269M1157 285L1169 269M1268 285L1280 269M1325 285L1337 269M1569 285L1581 269M489 210L501 194"/>
            <circle cx="495" cy="180" r="13"/><circle cx="514" cy="180" r="13"/><circle cx="565" cy="180" r="13"/><circle cx="575" cy="180" r="13"/><circle cx="651" cy="180" r="13"/><circle cx="684" cy="180" r="13"/><circle cx="748" cy="180" r="13"/><circle cx="1091" cy="180" r="13"/><circle cx="1163" cy="180" r="13"/><circle cx="1177" cy="180" r="13"/><circle cx="1274" cy="180" r="13"/><circle cx="1331" cy="180" r="13"/><circle cx="1493" cy="180" r="13"/><circle cx="1565" cy="180" r="13"/><circle cx="1575" cy="180" r="13"/>
            <circle cx="1636" cy="421" r="13"/><circle cx="1634" cy="618" r="13"/><circle cx="1634" cy="712" r="13"/><circle cx="1331" cy="767" r="13"/><circle cx="1575" cy="767" r="13"/><circle cx="1629" cy="790" r="13"/>
          </g>
          <g class="rl2">
            <path d="M573 192L675 295M715 168L581 295M692 190L787 295M1004 168L839 295M1097 182L1162 295M1185 187L1245 295M1296 168L1080 295M1448 168L1300 235M1649 192L1304 330M1495 182L1512 235M1569 187L1575 212M1575 350V779M1303 712H1649"/>
            <path class="rd" d="M1303 761H1649"/>
            <path class="rdd" d="M1511 363L1304 570"/>
          </g>
          <path class="dash" d="M566 246H1423V467H1308M554 256V295"/>
          <path d="M1303 419.500H1649M1303 424.500H1649" stroke="#fff" stroke-width="2"/>
          <path d="M1303 422H1649" stroke="#c01818" stroke-width="2"/>
          <path d="M1423 410V428" stroke="#3a6ea5" stroke-width="2"/>
          <g class="cl">
            <text x="482" y="187">B-1</text><text x="502" y="187">900</text><text x="535" y="187">1/A-13</text><text x="558" y="187">200</text>
            <text x="631" y="187">1800</text><text x="665" y="187">A-12</text><text x="734" y="187">B-2</text>
            <text x="1064" y="187">1/A-11</text><text x="1150" y="187">B-3</text><text x="1163" y="187">A-11</text><text x="1260" y="187">B-4</text><text x="1311" y="187">1600</text>
            <text x="1466" y="187">1/A-10</text><text x="1546" y="187">A-9</text><text x="1563" y="187">B-5</text>
            <text x="490" y="246">400</text><text x="525" y="246">1200</text><text x="593" y="246">1537</text><text x="679" y="246">1963</text><text x="936" y="246">8450</text><text x="1199" y="246">2251</text><text x="1284" y="246">1143</text><text x="1433" y="246">4956</text>
            <text x="1624" y="428">B-J</text><text x="1620" y="625">200</text><text x="1620" y="719">B-H</text><text x="1311" y="774">1600</text><text x="1563" y="774">B-5</text>
          </g>
        </svg>
        <div class="float3d">
          <svg viewBox="0 0 32 237" class="f3d-i">
            <circle cx="15" cy="24" r="11" fill="#6d7680"/><circle cx="22" cy="18" r="5" fill="#8b949d"/>
            <g fill="#4c5966" stroke="#a8a8a8"><path d="M4 50L9 45H28V64L23 69H4Z"/><path d="M4 50H23V69M23 50L28 45"/></g><text x="13" y="66" class="t3d">3D</text>
            <g fill="#566574" stroke="#a8a8a8"><path d="M4 76L9 70H28V88L23 94H4Z"/><path d="M4 76H23V94M23 76L28 70M9 70V88H28M9 88L4 94"/></g>
            <path d="M12 98H20L16 102Z" fill="#222"/>
            <g fill="#4c5966" stroke="#a8a8a8"><path d="M4 115L9 110H28V129L23 134H4Z"/><path d="M4 115H23V134M23 115L28 110"/></g>
            <path d="M12 137H20L16 141Z" fill="#222"/>
            <path d="M25 153A11 11 0 1 0 27 165M22 143L27 153 16 153" fill="none" stroke="#999" stroke-width="1.500"/>
            <path d="M12 176H20L16 180Z" fill="#222"/>
            <path d="M5 186H27" stroke="#888"/>
            <g fill="none" stroke="#a8a8a8"><path d="M4 195H28V216H4ZM4 200H28M16 200V216"/><path d="M7 204H13M7 208H13M7 212H13M19 204H25M19 208H25M19 212H25" stroke-dasharray="2 1"/></g>
          </svg>
        </div>
        <svg class="cv31" viewBox="0 0 20 20"><text x="0" y="16" class="t31">31</text></svg>
      </div>
      <div class="cg"></div>
      <div class="bp">
        <div class="bp-bar"><span class="pn-x">✕</span></div>
        <div class="bp-l"></div>
        <div class="bp-d"></div>
        <div class="bp-tb"></div>
        <div class="bp-d2"></div>
        <div class="bp-wrap">
          <div class="rt">
            <div class="rth">
              <span>筋号</span><span>直径(mm)</span><span>级别</span><span>图号</span><span>图形</span><span>计算公式</span><span>公式描述</span><span>长度</span><span>根数</span><span>搭接</span><span>损耗(%)</span><span>单重(kg)</span><span>总重(kg)</span><span>钢筋归类</span><span>搭接形式</span><span></span>
            </div>
            <div class="rtr">
              <span class="hl"></span><span></span><span></span><span></span><span></span><span></span><span></span><span></span><span></span><span></span><span></span><span></span><span></span><span></span><span></span><span></span>
            </div>
            <div class="rt-blank"></div>
            <div class="rt-sb"><span class="rt-th"></span></div>
          </div>
        </div>
      </div>
    </section>

    <aside class="disp">
      <div class="pn-bar db"><span class="pn-x">✕</span></div>
      <div class="d-title">显示设置</div>
      <div class="d-tabs"><span class="dt on">图元显示</span><span class="dt">楼层显示</span></div>
      <div class="d-tbl">
        <div class="dh"><span>图层构件</span><span>显示图元</span><span>显示名称</span></div>
        <div class="d-body">
          <div class="dr"><span class="nm l0"><i class="ex">−</i>所有构件</span><span><i class="ck mix"></i></span><span><i class="ck"></i></span></div>
          <div class="dr"><span class="nm l1"><i class="ex">−</i>轴线</span><span><i class="ck on"></i></span><span><i class="ck dim"></i></span></div>
          <div class="dr"><span class="nm l2"><i class="tk"></i>轴网</span><span><i class="ck on"></i></span><span><i class="ck dim"></i></span></div>
          <div class="dr"><span class="nm l2"><i class="tk"></i>辅助轴线</span><span><i class="ck on"></i></span><span><i class="ck dim"></i></span></div>
          <div class="dr"><span class="nm l1"><i class="ex">−</i>柱</span><span><i class="ck mix"></i></span><span><i class="ck"></i></span></div>
          <div class="dr"><span class="nm l2"><i class="tk"></i>柱</span><span><i class="ck"></i></span><span><i class="ck"></i></span></div>
          <div class="dr"><span class="nm l2"><i class="tk"></i>构造柱</span><span><i class="ck on"></i></span><span><i class="ck"></i></span></div>
          <div class="dr"><span class="nm l2"><i class="tk"></i>砌体柱</span><span><i class="ck"></i></span><span><i class="ck"></i></span></div>
          <div class="dr"><span class="nm l1"><i class="ex">−</i>墙</span><span><i class="ck"></i></span><span><i class="ck"></i></span></div>
          <div class="dr"><span class="nm l2"><i class="tk"></i>剪力墙</span><span><i class="ck"></i></span><span><i class="ck"></i></span></div>
          <div class="dr"><span class="nm l2"><i class="tk"></i>砌体墙</span><span><i class="ck"></i></span><span><i class="ck"></i></span></div>
          <div class="dr"><span class="nm l2"><i class="tk"></i>砌体加筋</span><span><i class="ck"></i></span><span><i class="ck"></i></span></div>
          <div class="dr"><span class="nm l2"><i class="tk"></i>保温墙</span><span><i class="ck"></i></span><span><i class="ck"></i></span></div>
          <div class="dr"><span class="nm l2"><i class="tk"></i>暗梁</span><span><i class="ck"></i></span><span><i class="ck"></i></span></div>
          <div class="dr"><span class="nm l2"><i class="tk"></i>墙垛</span><span><i class="ck"></i></span><span><i class="ck"></i></span></div>
          <div class="dr"><span class="nm l2"><i class="tk"></i>幕墙</span><span><i class="ck"></i></span><span><i class="ck"></i></span></div>
          <div class="dr"><span class="nm l1"><i class="ex">−</i>门窗洞</span><span><i class="ck"></i></span><span><i class="ck"></i></span></div>
          <div class="dr"><span class="nm l2"><i class="tk"></i>门</span><span><i class="ck"></i></span><span><i class="ck"></i></span></div>
          <div class="dr"><span class="nm l2"><i class="tk"></i>窗</span><span><i class="ck"></i></span><span><i class="ck"></i></span></div>
          <div class="dr"><span class="nm l2"><i class="tk"></i>门联窗</span><span><i class="ck"></i></span><span><i class="ck"></i></span></div>
          <div class="dr"><span class="nm l2"><i class="tk"></i>墙洞</span><span><i class="ck"></i></span><span><i class="ck"></i></span></div>
          <div class="dr"><span class="nm l2"><i class="tk"></i>带形窗</span><span><i class="ck"></i></span><span><i class="ck"></i></span></div>
          <div class="dr"><span class="nm l2"><i class="tk"></i>带形洞</span><span><i class="ck"></i></span><span><i class="ck"></i></span></div>
          <div class="dr"><span class="nm l2"><i class="tk"></i>飘窗</span><span><i class="ck"></i></span><span><i class="ck"></i></span></div>
          <div class="dr"><span class="nm l2"><i class="tk"></i>老虎窗</span><span><i class="ck"></i></span><span><i class="ck"></i></span></div>
          <div class="dr"><span class="nm l2"><i class="tk"></i>过梁</span><span><i class="ck"></i></span><span><i class="ck"></i></span></div>
          <div class="dr"><span class="nm l2"><i class="tk"></i>壁龛</span><span><i class="ck"></i></span><span><i class="ck"></i></span></div>
          <div class="dr"><span class="nm l1"><i class="ex">−</i>梁</span><span><i class="ck mix"></i></span><span><i class="ck"></i></span></div>
          <div class="dr"><span class="nm l2"><i class="tk"></i>梁</span><span><i class="ck on"></i></span><span><i class="ck"></i></span></div>
          <div class="dr"><span class="nm l2"><i class="tk"></i>连梁</span><span><i class="ck"></i></span><span><i class="ck"></i></span></div>
          <div class="dr"><span class="nm l2"><i class="tk"></i>圈梁</span><span><i class="ck"></i></span><span><i class="ck"></i></span></div>
          <div class="dr"><span class="nm l1"><i class="ex">−</i>板</span><span><i class="ck"></i></span><span><i class="ck"></i></span></div>
          <div class="dr"><span class="nm l2"><i class="tk"></i>现浇板</span><span><i class="ck"></i></span><span><i class="ck"></i></span></div>
          <div class="dr"><span class="nm l2"><i class="tk"></i>螺旋板</span><span><i class="ck"></i></span><span><i class="ck"></i></span></div>
        </div>
        <div class="d-sb"><span class="up"></span><span class="d-th"></span><span class="dn"></span></div>
      </div>
    </aside>
  </main>

  <footer class="status">
    <span class="s1">X = 22181 Y = 51504</span><span class="s2">层高 : 10</span><span class="s3">标高 : 4.4~14.4</span><span class="s4">0</span><span class="s5">隐藏 : 0</span>
    <span class="sb1 w20"><svg class="ss" viewBox="0 0 14 14"><path d="M2 1V12H13M5 9H9" fill="none" stroke="#ccc"/></svg></span>
    <span class="sb1 w36 act"><svg class="ss" viewBox="0 0 14 14"><path d="M2 2H11V13H2Z" fill="none" stroke="#cfe0f4"/><rect x="0" y="0" width="5" height="5" fill="#e89a3a"/></svg><span class="car">▾</span></span>
    <span class="sb1 w20"><svg class="ss" viewBox="0 0 14 14"><path d="M2 2L12 12M12 2L2 12" stroke="#777"/></svg></span>
    <span class="sb1 w37 act"><svg class="ss" viewBox="0 0 14 14"><path d="M1 13L12 2M1 13H13" stroke="#7fb0e8"/><path d="M7 10L9 13" stroke="#e89a3a"/></svg><span class="car">▾</span></span>
    <span class="sb1 w34"><svg class="ss" viewBox="0 0 14 14"><path d="M4 1V7M1 4H7" stroke="#ddd"/><path d="M5 9H13V13H5Z" fill="#ddd"/></svg><span class="car">▾</span></span>
    <span class="sb1 w74">跨图层选择</span><span class="sb1 w60">折线选择</span>
    <span class="smsg">按鼠标左键指定第一个角点，或拾取构件图元</span>
    <span class="fps">333.333 FPS</span>
  </footer>

  <div class="taskbar">
    <span class="ts start"><svg class="tic"><use href="#t-win"/></svg></span>
    <span class="ts"><svg class="tic"><use href="#t-q"/></svg></span>
    <span class="ts"><svg class="tic"><use href="#t-ie"/></svg></span>
    <span class="ts"><svg class="tic"><use href="#t-fo"/></svg></span>
    <span class="ts"><svg class="tic"><use href="#t-pl"/></svg></span>
    <span class="ts"><svg class="tic"><use href="#t-pdf"/></svg></span>
    <span class="ts"><svg class="tic"><use href="#t-k"/></svg></span>
    <span class="ts"><svg class="tic"><use href="#t-iq"/></svg></span>
    <span class="tbtn first"><svg class="tic"><use href="#t-t"/></svg></span>
    <span class="tbtn"><svg class="tic"><use href="#t-pa"/></svg></span>
    <span class="tbtn"><svg class="tic"><use href="#t-e"/></svg></span>
    <span class="tbtn"><svg class="tic"><use href="#t-ap"/></svg></span>
    <div class="tray">
      <svg class="tri-i"><use href="#s-um"/></svg><svg class="tri-i"><use href="#s-e"/></svg><svg class="tri-i"><use href="#s-q"/></svg><svg class="tri-i"><use href="#s-sh"/></svg><svg class="tri-i"><use href="#s-nv"/></svg><svg class="tri-i"><use href="#s-ye"/></svg><svg class="tri-i"><use href="#s-pl"/></svg><svg class="tri-i"><use href="#s-nt"/></svg><svg class="tri-i"><use href="#s-sp"/></svg>
      <div class="clock"><span>11:28</span><span>2018/6/27</span></div>
      <span class="showd"></span>
    </div>
  </div>
</div>

<div class="netw">
  <div class="ball"><span>55%</span></div>
  <div class="net-t"><span><b class="au">↑</b>0.03K/s</span><span><b class="ad">↓</b>0.03K/s</span></div>
  <span class="net-p">+</span>
</div>

<div class="ime">
  <span class="ime-s">S</span>
  <span class="ime-zh">中</span><span class="ime-p">°,</span>
  <svg class="im" viewBox="0 0 16 16"><circle cx="8" cy="8" r="7" fill="none" stroke="#1d66c8" stroke-width="1.500"/><circle cx="5.500" cy="6" r="1" fill="#1d66c8"/><circle cx="10.500" cy="6" r="1" fill="#1d66c8"/><path d="M4 10C6 13 10 13 12 10" fill="none" stroke="#1d66c8"/></svg>
  <svg class="im" viewBox="0 0 16 16"><rect x="5" y="0" width="6" height="10" rx="3" fill="#1d66c8"/><path d="M3 7C3 13 13 13 13 7M8 12V16" fill="none" stroke="#1d66c8" stroke-width="1.500"/></svg>
  <svg class="im" viewBox="0 0 16 16"><rect x="0" y="2" width="16" height="12" rx="1" fill="none" stroke="#1d66c8" stroke-width="1.500"/><path d="M3 5H13M3 8H13" stroke="#1d66c8" stroke-dasharray="1.500 1"/><path d="M4 11H12" stroke="#1d66c8"/></svg>
  <svg class="im" viewBox="0 0 16 16"><circle cx="6" cy="4" r="3" fill="#b8c4d4"/><path d="M1 14V10C1 8 3 7 6 7S11 8 11 10V14Z" fill="#b8c4d4"/><rect x="8" y="9" width="8" height="6" fill="#fff" stroke="#8aa"/></svg>
  <svg class="im" viewBox="0 0 16 16"><path d="M5 1L8 2 11 1 15 4 13 7 12 6V15H4V6L3 7 1 4Z" fill="#1d66c8"/></svg>
  <svg class="im" viewBox="0 0 16 16"><path d="M1 1H7V7H1ZM9 1H15V7H9ZM1 9H7V15H1ZM9 9H15V15H9Z" fill="#1d66c8"/></svg>
</div>

<div class="dlg">
  <div class="dlg-t"><span>选择参数化图形</span><span class="dlg-c"><i class="dmax"></i><i class="dcl">✕</i></span></div>
  <div class="dlg-r1">
    <span class="lab">截面类型：</span>
    <span class="unit">单位：</span><span class="mm">mm</span>
    <i class="rad on"></i><span class="rl1">角度放坡形式</span>
    <i class="rad"></i><span class="rl1">底宽放坡形式</span>
    <span class="btnb pj">配筋形式</span>
  </div>
  <div class="dlg-m">
    <div class="grid">
      <div class="cell">
        <svg class="th" viewBox="0 0 420 407" preserveAspectRatio="none">
          <rect class="thb" width="420" height="407"/>
          <rect class="sy" x="79" y="66" width="331" height="160"/>
          <use href="#hr" x="202" y="125" width="64" height="38"/>
          <path class="sk" d="M20 66H68M38 66V226M20 226H68M79 250V280M410 250V280M79 267H410"/>
          <text class="tw" x="25" y="152" transform="rotate(-90 25 145)">A</text><text class="tw" x="232" y="256">B</text>
          <text class="tbt" x="167" y="331" font-size="44">矩形承台</text>
        </svg>
      </div>
      <div class="cell">
        <svg class="th" viewBox="0 0 420 407" preserveAspectRatio="none">
          <rect class="thb" width="420" height="407"/>
          <path class="sy" d="M187 95H240L362 265 337 310H93L64 265Z"/>
          <circle class="sw" cx="212" cy="152" r="29"/><circle class="sw" cx="140" cy="262" r="29"/><circle class="sw" cx="284" cy="262" r="29"/>
          <use href="#hr" x="189" y="207" width="47" height="29"/>
          <path class="sk" d="M187 75H241M187 68V84M241 68V84M395 95V310M372 95H395M372 155H395M372 265H395M372 310H395M40 342H386M76 330V350M94 330V350M143 330V350M286 330V350M335 330V350M353 330V350"/>
          <text class="tx" x="200" y="68">x4</text><text class="tx" x="40" y="334">x1</text><text class="tx" x="102" y="334">x2</text><text class="tx" x="198" y="334">x3</text><text class="tx" x="294" y="334">x2</text><text class="tx" x="354" y="334">x1</text>
          <text class="tx" x="374" y="130" transform="rotate(-90 374 130)">y3</text><text class="tx" x="374" y="218" transform="rotate(-90 374 218)">y2</text><text class="tx" x="374" y="298" transform="rotate(-90 374 298)">y1</text>
          <text class="tbt" x="145" y="382" font-size="28">三桩承台一</text>
        </svg>
      </div>
      <div class="cell sel">
        <svg class="th" viewBox="0 0 420 407" preserveAspectRatio="none">
          <rect class="thb" width="420" height="407"/>
          <path class="sy" d="M180 84H235L357 255 332 302H88L59 255Z"/>
          <circle class="sw" cx="206" cy="143" r="29"/><circle class="sw" cx="134" cy="254" r="29"/><circle class="sw" cx="278" cy="254" r="29"/>
          <use href="#hr" x="187" y="195" width="48" height="26"/>
          <path class="sk" d="M181 66H235M181 58V76M235 58V76M385 84V302M365 84H388M365 146H388M365 255H388M365 302H388M33 330H380M70 310V338M88 310V338M137 310V338M280 310V338M329 310V338M346 310V338"/>
          <text class="tx" x="194" y="59">x4</text><text class="tx" x="34" y="325">x1</text><text class="tx" x="96" y="325">x2</text><text class="tx" x="192" y="325">x3</text><text class="tx" x="290" y="325">x2</text><text class="tx" x="348" y="325">x1</text>
          <text class="tx" x="368" y="122" transform="rotate(-90 368 122)">y3</text><text class="tx" x="368" y="206" transform="rotate(-90 368 206)">y2</text><text class="tx" x="368" y="286" transform="rotate(-90 368 286)">y1</text>
          <text class="tbt" x="138" y="370" font-size="28">三桩承台二</text>
        </svg>
      </div>
      <div class="cell">
        <svg class="th" viewBox="0 0 420 407" preserveAspectRatio="none">
          <rect class="thb" width="420" height="407"/>
          <text class="tbs" x="57" y="84">阶式四桩台</text>
          <rect class="sp" x="130" y="130" width="195" height="188"/>
          <rect x="213" y="204" width="30" height="43" fill="#8c9d6a" stroke="#d4dc6c" stroke-width="2"/>
          <path class="sd" d="M78 131H124M98 131V318M78 318H124M130 325V368M323 325V368M130 344H323"/>
          <path d="M98 131L92 148H104ZM98 318L92 301H104ZM130 344L147 338V350ZM323 344L306 338V350Z" fill="#222"/>
          <text class="ta" x="48" y="232" font-size="44">A</text><text class="ta" x="217" y="391" font-size="44">A</text>
        </svg>
      </div>
      <div class="cell">
        <svg class="th" viewBox="0 0 420 407" preserveAspectRatio="none">
          <rect class="thb" width="420" height="407"/>
          <text class="tbs" x="57" y="84">阶式五桩台</text>
          <path class="sp" d="M249 125L356 198 316 311H182L141 198Z"/>
          <rect x="226" y="200" width="46" height="27" fill="#8c9d6a" stroke="#d4dc6c" stroke-width="2"/>
          <path class="sd" d="M98 128H142M119 128V312M98 312H142M182 322V360M316 322V360M182 340H316"/>
          <path d="M119 128L113 145H125ZM119 312L113 295H125ZM182 340L199 334V346ZM316 340L299 334V346Z" fill="#222"/>
          <text class="ta" x="60" y="232" font-size="38" transform="rotate(-90 72 215)">A</text>
          <text class="tm" x="147" y="385">B=A/1.5385</text>
        </svg>
      </div>
      <div class="cell">
        <svg class="th" viewBox="0 0 420 407" preserveAspectRatio="none">
          <rect class="thb" width="420" height="407"/>
          <text class="tbs" x="57" y="84">阶式六桩台</text>
          <path class="sp" d="M206 126H318L372 218 318 311H206L152 218Z"/>
          <rect x="240" y="204" width="46" height="27" fill="#8c9d6a" stroke="#d4dc6c" stroke-width="2"/>
          <path class="sd" d="M118 126H162M139 126V311M118 311H162M206 322V360M316 322V360M206 340H316"/>
          <path d="M139 126L133 143H145ZM139 311L133 294H145ZM206 340L223 334V346ZM316 340L299 334V346Z" fill="#222"/>
          <text class="ta" x="80" y="226" font-size="38" transform="rotate(-90 92 210)">A</text>
          <text class="tm" x="152" y="385">B=A/1.7326</text>
        </svg>
      </div>
      <div class="cell">
        <svg class="th" viewBox="0 0 420 407" preserveAspectRatio="none">
          <rect class="thb" width="420" height="407"/>
          <path class="sy" d="M217 75H272L392 243V318H94V243Z"/>
          <circle class="sw" cx="243" cy="133" r="29"/><circle class="sw" cx="171" cy="270" r="29"/><circle class="sw" cx="315" cy="270" r="29"/>
          <use href="#hr" x="219" y="198" width="47" height="28"/>
          <path class="sk" d="M217 50H272M217 42V60M272 42V60M72 75V318M65 75H90M65 135H90M65 243H90M65 268H90M65 318H90M94 340H392M94 328V352M172 328V352M243 328V352M316 328V352M392 328V352"/>
          <text class="tx" x="230" y="46">x5</text><text class="tx" x="118" y="335">x1</text><text class="tx" x="194" y="335">x2</text><text class="tx" x="266" y="335">x2</text><text class="tx" x="338" y="335">x1</text>
          <text class="tx" x="56" y="112" transform="rotate(-90 56 112)">y4</text><text class="tx" x="56" y="196" transform="rotate(-90 56 196)">y3</text><text class="tx" x="56" y="264" transform="rotate(-90 56 264)">y2</text><text class="tx" x="56" y="306" transform="rotate(-90 56 306)">y1</text>
          <text class="tbt" x="163" y="386" font-size="28">不等边承台一</text>
        </svg>
      </div>
      <div class="cell">
        <svg class="th" viewBox="0 0 420 407" preserveAspectRatio="none">
          <rect class="thb" width="420" height="407"/>
          <path class="sy" d="M153 68H197L377 180V250H64V180Z"/>
          <circle class="sw" cx="182" cy="110" r="24"/><circle class="sw" cx="119" cy="215" r="24"/><circle class="sw" cx="321" cy="215" r="24"/>
          <use href="#hr" x="172" y="158" width="34" height="24"/>
          <path class="sk" d="M103 50H195M155 44V56M187 44V56M48 68V250M40 68H62M40 110H62M40 192H62M40 215H62M40 250H62M64 272H377M64 260V284M120 260V284M181 260V284M322 260V284M377 260V284M405 180V216M395 180H410M395 216H410"/>
          <text class="tx" x="104" y="42">x5</text><text class="tx" x="200" y="42">x6</text><text class="tx" x="78" y="266">x1</text><text class="tx" x="138" y="266">x2</text><text class="tx" x="240" y="266">x3</text><text class="tx" x="336" y="266">x4</text>
          <text class="tbt" x="135" y="330" font-size="28">不等边承台二</text>
        </svg>
      </div>
      <div class="cell">
        <svg class="th" viewBox="0 0 420 407" preserveAspectRatio="none">
          <rect class="thb" width="420" height="407"/>
          <path class="sy" d="M212 70H265L386 240V315H88V240Z"/>
          <circle class="sw" cx="236" cy="130" r="29"/><circle class="sw" cx="164" cy="268" r="29"/><circle class="sw" cx="308" cy="268" r="29"/>
          <use href="#hr" x="214" y="190" width="46" height="30"/>
          <path class="sk" d="M212 54H265M212 46V62M265 46V62M65 70V315M58 70H82M58 132H82M58 238H82M58 265H82M58 315H82M88 337H386M88 325V349M166 325V349M238 325V349M311 325V349M386 325V349"/>
          <text class="tx" x="222" y="46">x5</text><text class="tx" x="112" y="333">x1</text><text class="tx" x="188" y="333">x2</text><text class="tx" x="260" y="333">x2</text><text class="tx" x="332" y="333">x1</text>
          <text class="tx" x="50" y="108" transform="rotate(-90 50 108)">y4</text><text class="tx" x="50" y="192" transform="rotate(-90 50 192)">y3</text><text class="tx" x="50" y="260" transform="rotate(-90 50 260)">y2</text><text class="tx" x="50" y="302" transform="rotate(-90 50 302)">y1</text>
          <text class="tbt" x="138" y="384" font-size="28">不等边承台三</text>
        </svg>
      </div>
    </div>
    <div class="gsb"></div>
    <svg class="pv" viewBox="828 367 463 462">
      <rect x="828" y="367" width="463" height="462" fill="#000"/>
      <g transform="translate(860 470) scale(.33333)">
        <g clip-path="url(#hexclip)">
          <path d="M255 260L335 340 190 590H100L60 480Z" fill="url(#pgreen)"/>
          <path d="M365 260L290 340 430 590H497L552 480Z" fill="url(#pgreen2)"/>
          <path d="M245 125H360L350 230 325 330H295L265 230Z" fill="url(#plime)"/>
          <path d="M150 125H460M150 140H460M150 155H460M150 170H460M150 185H460M150 200H460M150 215H460M150 230H460M150 245H460M150 260H460" stroke="#f5ef4a" stroke-width="3"/>
          <path d="M40 427H540M40 440H540M40 453H540M40 466H540M40 479H540M40 492H540M40 505H540M40 518H540M40 530H540" stroke="#e030d8" stroke-width="3.500"/>
          <path d="M145 325L275 590M115 385L215 590M85 445L160 590M60 480L120 590" stroke="#f01414" stroke-width="3"/>
          <path d="M470 325L340 590M500 385L395 590M525 430L450 590M545 480L495 590" stroke="#36e4e4" stroke-width="3"/>
        </g>
        <path d="M245 125H360L548 480 497 590H112L62 480Z" class="pw"/>
        <path d="M175 262L310 345 442 270" class="pw"/>
        <path d="M385 125V262" class="pw"/>
        <circle cx="175" cy="480" r="58" class="pwd"/><circle cx="430" cy="480" r="58" class="pwd"/>
        <path d="M256 352H352V445H256ZM262 438L300 395M290 440L345 380M262 395L300 358M315 390L340 358" class="pw"/>
        <path d="M305 52V345M285 68H325M285 78H325M278 445V650M305 630V690M285 680H325M285 692H325M280 645H470" class="pw"/>
        <path d="M570 122V592M558 228H580M558 480H580M558 592H580M385 140H490" class="pw"/>
        <path d="M60 598V618M112 598V618M172 598V618M60 610H548M430 598V618M495 598V618M548 598V618" class="pw"/>
        <path d="M0 482H48M582 482H640" class="pw"/>
        <path d="M948 145H1040M968 145V292M1030 145V292M985 158L992 135 996 158" class="pw"/>
        <rect x="755" y="292" width="465" height="150" class="pw"/>
        <path d="M797 412H857V652M797 412V652M965 412H1025V652M965 412V652M1118 412H1180V652M1118 412V652M778 652H870M946 652H1038M1099 652H1192" class="pw"/>
        <path d="M820 660L826 642 830 664M988 660L994 642 998 664M1141 660L1147 642 1151 664" class="pw"/>
        <path d="M765 345V402H1207V345" fill="none" stroke="#e030d8" stroke-width="5"/>
        <path d="M771 325V394H1200V325" fill="none" stroke="#ffef1a" stroke-width="4"/>
        <path d="M692 292H712M702 292V442M692 442H712M738 347H752M745 347V442M881 412V445M881 412H895M1033 402V466H1170M1180 330V392M1224 327H1245" class="pw"/>
        <path d="M810 392V360H885M900 392V370H995M935 392V372M970 392V372M1118 408L1128 385H1200M1140 408L1150 385M1165 408L1175 385" class="pw"/>
        <path d="M912 758H1028" class="pw"/>
        <text class="pt2" x="345" y="103">承台范围内主筋之外均匀布置</text>
        <text class="pg" x="388" y="134">C12@200</text>
        <text class="pg" transform="rotate(-90 576 180)" x="540" y="180">1000</text>
        <text class="pg" transform="rotate(-90 576 365)" x="540" y="365">2858</text>
        <text class="pg" transform="rotate(-90 576 560)" x="540" y="560">1000</text>
        <text class="pt2" transform="rotate(-26 425 238)" x="425" y="238">桩间连接筋</text>
        <text class="pg" transform="rotate(-26 442 262)" x="442" y="262">12C25</text>
        <text class="pt2" transform="rotate(-26 450 288)" x="450" y="288">布置范围</text>
        <text class="pg" transform="rotate(-26 475 316)" x="475" y="316">1000</text>
        <text class="pt2" transform="rotate(28 98 196)" x="98" y="196">桩间连接筋</text>
        <text class="pg" transform="rotate(28 92 224)" x="92" y="224">12C25</text>
        <text class="pt2" transform="rotate(28 82 248)" x="82" y="248">布置范围</text>
        <text class="pg" transform="rotate(28 68 276)" x="68" y="276">1000</text>
        <text class="pg" x="67" y="632">577</text><text class="pg" x="121" y="632">577</text><text class="pg" x="274" y="622">3300</text>
        <text class="pt2" x="364" y="641">桩间连接筋</text><text class="pg" x="496" y="641">12C25</text>
        <text class="pt2" x="364" y="670">布置范围</text><text class="pg" x="470" y="670">1000</text>
        <text class="pl" x="10" y="480">1</text><text class="pl" x="603" y="480">1</text>
        <text class="pti" x="187" y="750">三桩承台二</text>
        <text class="pl2" x="930" y="752">1-1</text>
        <text class="pg" transform="rotate(-90 706 385)" x="706" y="385">500</text>
        <text class="pg" transform="rotate(-90 732 380)" x="732" y="380">0</text>
        <text class="pg" transform="rotate(-90 905 442)" x="905" y="442">100</text>
        <text class="pg" transform="rotate(-90 1180 352)" x="1180" y="352">C12@200</text>
        <text class="pg" transform="rotate(-90 1260 385)" x="1260" y="385">10*d</text>
        <text class="pt2" x="806" y="352">分布筋</text><text class="pt2" x="898" y="366">分布筋</text><text class="pt2" x="1075" y="380">桩间连接筋</text><text class="pt2" x="1035" y="464">桩间连接筋</text>
        <text class="pt2" transform="rotate(-90 750 580)" x="750" y="580">桩间连接筋弯折</text>
        <text class="pt2" transform="rotate(-90 1152 325)" x="1152" y="325">侧面筋</text>
        <text class="pt2" transform="rotate(-90 1248 518)" x="1248" y="518">分布筋弯折</text>
      </g>
    </svg>
  </div>
  <div class="dlg-f"><span class="btnb">确定</span><span class="btnw">取消</span></div>
</div>
</body>
</html>
```
FILE: styles.css
```css
*{box-sizing:border-box}
html,body{margin:0;height:100%;overflow:hidden}
body{width:1920px;height:1080px;font:12px/1.2 "Liberation Sans","Noto Sans CJK SC",sans-serif;color:#e2e2e2;background:#3c3c3c}
.sprite{width:0;height:0;display:block}
svg{display:block;flex:none}
i{font-style:normal}
.car{font-size:9px;color:#aaa;margin-left:5px}
.ic15{width:15px;height:15px}
.ic16{width:16px;height:16px}
.ic14{width:14px;height:14px}
.app{display:flex;flex-direction:column;width:1920px;height:1080px}

/* header */
.hdr{display:flex;height:41px;background:linear-gradient(#5a5a5a,#565656);border-bottom:1px solid #3d3d3d;flex:none}
.logo-box{width:46px;height:44px;background:#3a3a3a;padding:9px 0 0 9px;flex:none;z-index:1}
.logo{width:29px;height:27px}
.hdr-main{width:400px;flex:none;padding-left:9px}
.qat{display:flex;align-items:center;height:21px}
.qi{width:14px;height:14px;margin-left:0;margin-right:8px}
.q-sm{margin-right:0}
.qat .car{margin:0 5px 0 4px;font-size:8px}
.qon{display:flex;align-items:center;justify-content:center;width:22px;height:19px;background:#5b78ab;border:1px solid #2e2e2e;margin:0 4px 0 -2px}
.qon .qi{margin:0}
.tabs{display:flex;height:17px;margin:3px 0 0 7px}
.tab{height:16px;line-height:16px;margin-right:26px;white-space:nowrap;color:#e6e6e6}
.tab.on{background:#595959;box-shadow:-12px 0 0 #595959,12px 0 0 #595959}
.title{flex:none;width:443px;margin-left:292px;padding-top:4px;font:11.5px/14px "Liberation Mono","Noto Sans CJK SC",monospace;color:#eee;white-space:nowrap;letter-spacing:-.65px}
.hdr-right{flex:1;display:flex;flex-direction:column;align-items:flex-end}
.winctl{display:flex;height:21px;align-items:center;gap:27px;padding-right:11px;color:#777}
.wmin{width:7px;height:2px;background:#777;margin-top:3px}
.wres{width:9px;height:9px;border:1px solid #777}
.wcl{font-size:11px}
.user{display:flex;align-items:center;height:19px;padding-right:2px}
.avatar{width:16px;height:16px;margin-right:3px}
.uname{width:37px;color:#eee}
.ui{width:13px;height:13px;margin-right:10px}
.ui:last-of-type{margin-right:7px}
.uq{font-size:14px;color:#b5b5b5;font-weight:700}
.uq+.car{margin:0 9px 0 2px;font-size:8px}
.srch{display:flex;align-items:center;justify-content:space-between;width:154px;height:17px;background:#fff;color:#111;padding:0 4px 0 3px}
.srch-i{width:12px;height:12px}

/* ribbon */
.ribbon{display:flex;height:98px;flex:none;background:linear-gradient(#5b5b5b,#4a4a4a);border-bottom:1px solid #353535}
.rg{display:flex;flex-direction:column;flex:none;height:94px;margin-top:3px;border-right:1px solid #3a3a3a}
.g1{width:146px}.g2{width:91px}.g3{width:276px}.g4{width:236px}.g5{width:120px}.g6{width:90px}.g7{width:366px;border-right:1px solid #3a3a3a}
.rb{display:flex;height:71px;align-items:flex-start}
.g1 .rb{padding-left:8px}.g2 .rb{padding:1px 0 0 9px}.g3 .rb{padding:1px 0 0 10px}.g4 .rb{padding:1px 0 0 9px}.g7 .rb{padding:1px 0 0 7px}
.rl{height:22px;display:flex;align-items:center;justify-content:center;color:#ddd}
.g6 .rl,.g7 .rl{padding-top:3px}
.rc{display:flex;flex-direction:column;flex:none}
.c-a{margin-left:5px;padding-top:1px}
.w65{width:65px}.w111{width:111px}.w54{width:54px}.w55{width:55px}.w53{width:53px}.w103{width:103px}.w114{width:114px}
.ri{display:flex;align-items:center;gap:4px;height:23px;white-space:nowrap;color:#e6e6e6}
.ri.off,.off{color:#8d8d8d}
.bigsel{width:40px;height:67px;background:#5b78ab;border:1px solid #3c3c3c;display:flex;flex-direction:column;align-items:center;padding-top:4px;gap:7px;color:#eee}
.bigsel-i{width:34px;height:29px}
.bigbtn{display:flex;flex-direction:column;align-items:center;flex:none}
.big-i{width:32px;height:30px;margin-bottom:6px}
.b-pt{margin:3px 0 0 10px;width:32px}
.b-ln{margin:3px 0 0 8px;width:32px}
.mini3{display:flex;flex-direction:column;gap:8px;margin:2px 0 0 11px}
.b-id{margin:0 0 0 9px;width:36px;line-height:18px}
.id-i{width:26px;height:36px;margin-bottom:4px}
.b-sm{margin:3px 0 0 0;width:50px}
.sm-i{width:30px;height:30px;margin-bottom:5px}
.b-sm .car{margin:2px 0 0}
.g7 .b-sm{margin-right:4px}

/* dropdown row */
.ddbar{display:flex;gap:6px;height:29px;padding:4px 0 0 4px;background:#424242;border-bottom:1px solid #2e2e2e;flex:none}
.dd{display:flex;align-items:center;justify-content:space-between;width:99px;height:22px;padding:0 4px 0 3px;background:#4c4c4c;border:1px solid #3a3a3a;color:#e4e4e4}
.dd .car{color:#bbb}

/* main */
.main{display:flex;height:842px;flex:none;background:#3c3c3c}
.nav{width:170px;flex:none;background:#5c5c5c;border-left:1px solid #3f3f3f;position:relative;overflow:hidden}
.nav-h{display:flex;align-items:center;height:27px;padding-right:4px;border-bottom:1px solid #3f3f3f;background:#505050}
.nav-add{width:13px;height:11px;margin:0 auto 0 6px}
.nbtn{display:flex;align-items:center;justify-content:center;width:24px;height:25px;background:#444;border:1px solid #3a3a3a;border-radius:0 0 4px 4px;margin-left:5px}
.nb-i{width:16px;height:16px}
.nav-list{padding-top:5px}
.nv{display:flex;align-items:center;gap:6px;height:24px;padding-left:24px;color:#e0e0e0;white-space:nowrap}
.nv.g{padding-left:5px;gap:5px}
.nv.sel{background:linear-gradient(#5b78ab,#5b78ab) 21px 50%/130px 20px no-repeat;color:#f0f0f0}
.nav-thumb{position:absolute;left:155px;top:252px;width:8px;height:390px;background:#4a4a4a;border-radius:4px}

.mid{width:298px;flex:none;margin-left:4px;display:flex;flex-direction:column;gap:4px}
.pn{display:flex;flex-direction:column;background:#5c5c5c;border:1px solid #3a3a3a;border-top:0;overflow:hidden}
.pn-top{height:331px;flex:none}
.pn-prop{height:507px;flex:none;position:relative}
.pn-bar{height:12px;background:#3f3f3f;display:flex;justify-content:flex-end;align-items:center;padding-right:5px;flex:none}
.pn-x{font-size:9px;color:#ccc}
.pn-tabs{display:flex;height:22px;background:#464646;flex:none}
.pt{display:flex;align-items:center;justify-content:center;width:64px;color:#8f8f8f;border-right:1px solid #3a3a3a}
.pt.on{background:#5c5c5c;color:#e6e6e6;font-weight:700}
.tb{display:flex;align-items:center;height:29px;background:#5c5c5c;border-bottom:1px solid #4a4a4a;flex:none;padding-left:5px}
.tbi{display:flex;align-items:center;gap:5px;color:#e6e6e6}
.t1{width:67px}.t2{width:59px}.t3{width:58px}.t4{width:100px}
.tb-more{width:8px;height:8px;margin-left:auto;margin-right:3px}
.sb{display:flex;align-items:center;justify-content:space-between;height:19px;background:#505050;color:#999;padding:0 6px 0 3px;border-bottom:1px solid #484848;flex:none}
.sb-i{width:12px;height:12px}
.tree{padding-top:4px}
.tr0{display:flex;align-items:center;height:21px;padding-left:13px;gap:7px;color:#e6e6e6}
.tri{width:0;height:0;border-style:solid;border-width:0 0 7px 7px;border-color:transparent transparent #333 transparent}
.tr1{height:21px;line-height:21px;width:42px;margin-left:41px;padding-left:4px;font-size:13px;white-space:nowrap;color:#e6e6e6}
.tr1.on{background:#5b78ab;border:1px solid #4a4a4a;line-height:19px;padding-left:3px}
.prop{flex:1;background:linear-gradient(90deg,#636363 22px,#5c5c5c 22px)}
.pr{display:grid;grid-template-columns:22px 100px 1fr;height:21px;align-items:center;border-bottom:1px solid #4d4d4d;white-space:nowrap}
.pr>span{display:flex;align-items:center;height:100%;border-right:1px solid #4d4d4d;padding-left:3px;font-size:12px;overflow:hidden}
.pr>span:first-child{justify-content:center;padding:0;font-size:13px;color:#ccc}
.pr>span:last-child{border:0}
.ph{height:21px;background:#5c5c5c}
.phn{justify-content:center;padding:0!important}
.bl{color:#7fa6e6}
.dv{color:#888}
.plus{display:inline-flex;align-items:center;justify-content:center;width:13px;height:13px;border:1px solid #4a4a4a;border-radius:2px;margin-right:6px;font-size:13px;line-height:1}
.hs{display:flex;align-items:center;gap:4px;height:14px;padding:0 3px;margin-bottom:2px;flex:none}
.hs-l,.hs-r{width:0;height:0;border-style:solid;border-width:4px 4px 4px 0;border-color:transparent #3a3a3a transparent transparent}
.hs-r{border-width:4px 0 4px 4px;border-color:transparent transparent transparent #3a3a3a}
.hs-t{flex:1;height:8px;background:#4a4a4a;border-radius:4px}

.center{width:1173px;flex:none;margin-left:4px;display:flex;flex-direction:column}
.canvas{height:611px;position:relative;overflow:hidden;flex:none}
.cv{width:1173px;height:611px}
.gl{stroke:#1f7a1f;stroke-width:1;fill:none}
.gb{stroke:#2b8a2b;stroke-width:1.500}
.rl2{stroke:#c8201e;stroke-width:1.200;fill:none}
.rd{stroke:#901818}
.rdd{stroke:#6a1010;stroke-width:.8}
.dash{fill:none;stroke:#3a6ea5;stroke-width:2;stroke-dasharray:9 7}
.cl text{fill:#fff;font:18px "Liberation Sans",sans-serif}
.float3d{position:absolute;right:0;top:0;width:32px;height:237px;background:#4b4b4b;border-radius:5px 0 0 5px;border:1px solid #3c3c3c}
.f3d-i{width:32px;height:237px}
.t3d{font:8px "Liberation Sans";fill:#bbb}
.cv31{position:absolute;right:-1px;top:61px;width:20px;height:20px}
.t31{font:17px "Liberation Sans";fill:#eee}
.cg{height:4px;background:#4c4c4c;flex:none}
.bp{flex:1;display:flex;flex-direction:column;background:#3d3d3d;width:1164px}
.bp-bar{height:12px;background:#3f3f3f;display:flex;justify-content:flex-end;align-items:center;flex:none}
.bp-l{height:21px;background:#565656;flex:none}
.bp-d{height:10px;flex:none}
.bp-tb{height:30px;margin-left:16px;background:#4e4e4e;flex:none}
.bp-d2{height:5px;flex:none}
.bp-wrap{padding-left:16px;height:139px;flex:none}
.rt{border:1px solid #8a8a8a;border-top:0;background:#fff;height:139px;display:flex;flex-direction:column}
.rth,.rtr{display:grid;grid-template-columns:74px 56px 36px 33px 216px 165px 61px 39px 39px 46px 63px 61px 71px 74px 71px 1fr;flex:none}
.rth{height:22px;background:#606060;color:#cfcfcf}
.rth span{display:flex;align-items:center;justify-content:center;border-right:1px solid #777;white-space:nowrap;overflow:hidden}
.rtr{height:45px;border-bottom:1px solid #c8c8c8}
.rtr span{border-right:1px solid #c8c8c8}
.rtr .hl{background:#b9cdec;box-shadow:-3px 0 0 #2a2a1a}
.rt-blank{flex:1}
.rt-sb{height:17px;background:#5c5c5c;padding:4px 0 0 6px;flex:none}
.rt-th{display:block;width:900px;height:8px;background:#3f3f3f;border-radius:4px}

.disp{width:267px;flex:none;margin-left:4px;background:#5c5c5c;position:relative;overflow:hidden}
.db{justify-content:flex-end;padding-right:3px}
.d-title{height:22px;line-height:22px;padding-left:9px;font-weight:700;color:#eee;background:#545454;border-bottom:1px solid #4a4a4a}
.d-tabs{display:flex;gap:6px;height:32px;padding:6px 0 0 4px;align-items:flex-end;background:#4a4a4a}
.dt{display:flex;align-items:center;justify-content:center;width:59px;height:23px;background:#4f4f4f;color:#8f8f8f;border-radius:3px 3px 0 0}
.dt.on{height:25px;background:#5c5c5c;color:#eee}
.d-tbl{position:relative;margin:0 2px 0 4px;height:735px;border:1px solid #3f3f3f;overflow:hidden}
.dh{display:grid;grid-template-columns:118px 63px 63px;height:22px;align-items:center;text-align:center;border-bottom:1px solid #4a4a4a;color:#cfcfcf}
.dh span{border-right:1px solid #4a4a4a;line-height:21px}
.dr{display:grid;grid-template-columns:118px 63px 63px;height:21px;border-bottom:1px solid #505050;align-items:center}
.dr>span{display:flex;align-items:center;justify-content:center;height:100%;border-right:1px solid #505050}
.dr>.nm{justify-content:flex-start;color:#e4e4e4}
.l0{padding-left:3px}
.l1{padding-left:11px}
.l2{padding-left:19px;background:linear-gradient(#6e6e6e,#6e6e6e) 18px 0/1px 100% no-repeat}
.ex{display:inline-flex;align-items:center;justify-content:center;width:12px;height:12px;border:1px solid #4a4a4a;border-radius:2px;margin-right:7px;font-size:11px}
.l0 .ex{margin-right:8px}
.tk{width:20px;height:1px;background:#6e6e6e;margin-right:2px;margin-left:0}
.ck{display:flex;align-items:center;justify-content:center;width:14px;height:14px;border:1px solid #3f3f3f;border-radius:2px;background:#5a5a5a}
.ck.dim{border-color:#505050}
.ck.mix{padding:1px}
.ck.mix::after{content:"";width:10px;height:10px;border:1px solid #3f3f3f;border-radius:2px}
.ck.on{border-color:#3a3a3a}
.ck.on::after{content:"✔";font:10px/1 "DejaVu Sans";color:#e8e8e8}
.d-sb{position:absolute;right:0;top:0;bottom:0;width:15px;display:flex;flex-direction:column;align-items:center}
.up,.dn{width:0;height:0;border-style:solid;border-width:0 4px 5px;border-color:transparent transparent #333;margin:3px 0}
.dn{border-width:5px 4px 0;border-color:#333 transparent transparent;margin-top:auto}
.d-th{width:8px;height:248px;margin-top:4px;background:#4a4a4a;border-radius:4px}

/* status & taskbar */
.status{display:flex;align-items:center;height:30px;background:#3a3a3a;flex:none;color:#dcdcdc;white-space:nowrap}
.s1,.s2,.s3,.s4,.s5,.smsg,.fps{padding-top:3px}
.s1{width:209px;padding-left:2px}.s2{width:79px}.s3{width:133px}.s4{width:103px}.s5{width:81px}
.sb1{display:flex;align-items:center;justify-content:center;height:24px;background:#343434;margin-right:4px;border:1px solid #3f3f3f}
.sb1 .car{margin-left:3px;font-size:8px}
.w20{width:21px;margin-right:6px}.w36{width:36px;margin-right:2px}.w37{width:37px}.w34{width:34px}.w74{width:74px;margin-right:3px}.w60{width:60px}
.act{background:#1f3f66;border-color:#2c5a90}
.ss{width:14px;height:14px}
.smsg{margin-right:auto}
.fps{padding-right:12px}
.taskbar{display:flex;align-items:center;height:40px;flex:none;border-top:2px solid #fff;background:linear-gradient(90deg,#5e7fa6 0,#7f9dbf 110px,#a8c0dc 170px,#a8c0dc 100%);box-shadow:inset 0 1px 0 #c7d7ea}
.ts{display:flex;align-items:center;justify-content:center;width:62px;height:38px}
.start{width:54px}
.tic{width:34px;height:34px}
.tbtn{display:flex;align-items:center;justify-content:center;width:59px;height:38px;margin-left:3px;background:linear-gradient(#d5e2f0,#a8c2dd);border:1px solid #7d94ad;border-radius:3px}
.tbtn.first{margin-left:4px}
.tray{margin-left:auto;display:flex;align-items:center;gap:6px;height:38px}
.tri-i{width:18px;height:18px}
.clock{display:flex;flex-direction:column;align-items:center;gap:4px;width:70px;margin:0 4px 0 4px;font-size:13px;line-height:14px;color:#fff}
.showd{width:14px;height:38px;background:#8ea8c4;border-left:1px solid #dfe8f2;margin-left:-6px}

/* overlays */
.netw{position:absolute;left:1760px;top:525px;width:127px;height:47px;display:flex;align-items:center}
.netw::before{content:"";position:absolute;left:20px;top:5px;width:107px;height:38px;border-radius:19px;background:linear-gradient(#fff,#dde2e8);box-shadow:1px 2px 4px #0006}
.ball{position:relative;width:47px;height:47px;border-radius:50%;background:linear-gradient(#0f7a50 0,#0f7a50 52%,#3fcf62 52%,#3fcf62 100%);border:2px solid #e8f2e8;display:flex;align-items:center;justify-content:center;color:#fff;font-size:15px;flex:none}
.net-t{position:relative;display:flex;flex-direction:column;gap:3px;margin-left:7px;color:#222;font-size:10px;line-height:12px}
.au{color:#d84a3a;margin-right:7px}.ad{color:#3aa84a;margin-right:7px}
.net-p{position:absolute;left:102px;top:15px;width:18px;height:18px;border-radius:50%;background:#3d82e0;color:#fff;text-align:center;font:700 16px/18px "Liberation Sans";box-shadow:7px -6px 0 -5px #e02a2a}
.ime{position:absolute;left:1713px;top:974px;width:205px;height:28px;display:flex;align-items:center;gap:8px;padding-left:28px;background:linear-gradient(#fff,#fff) 25px 4px/180px 22px no-repeat}
.ime-s{position:absolute;left:0;top:0;width:28px;height:28px;background:#f04a1a;border-radius:6px;transform:rotate(-10deg);color:#fff;font:700 25px/28px "Liberation Sans";text-align:center}
.ime-zh{color:#1d66c8;font-weight:700;font-size:15px;margin-left:6px}
.ime-p{color:#1d66c8;font-weight:700;font-size:12px;width:12px;margin-left:2px}
.im{width:15px;height:15px}

.dlg{position:absolute;left:345px;top:295px;width:958px;height:576px;background:#f0f0f0;box-shadow:0 2px 6px #0008;display:flex;flex-direction:column}
.dlg-t{display:flex;align-items:center;justify-content:space-between;height:28px;padding:2px 8px 0;background:#3c6ca8;color:#e8e8e8;flex:none}
.dlg-c{display:flex;align-items:center;gap:19px;padding-right:1px}
.dmax{width:8px;height:7px;border:1px solid #fff;border-top-width:2px}
.dcl{color:#fff;font-size:11px}
.dlg-r1{display:flex;align-items:center;height:44px;padding:4px 12px 0;color:#222;flex:none;white-space:nowrap}
.lab{width:471px}
.unit{width:42px}
.mm{width:29px;color:#333}
.rad{width:14px;height:14px;border:1px solid #8a8a8a;border-radius:50%;background:#fff;margin-right:7px;display:flex;align-items:center;justify-content:center;flex:none}
.rad.on::after{content:"";width:8px;height:8px;border-radius:50%;background:#3c8ae0}
.rl1{width:79px}
.btnb{display:flex;align-items:center;justify-content:center;width:80px;height:26px;background:#2e7bdc;color:#e8f0fa;border-radius:3px}
.pj{margin:0 0 0 auto}
.btnw{display:flex;align-items:center;justify-content:center;width:80px;height:26px;background:#fff;color:#222;border:1px solid #c6c6c6;border-radius:3px}
.dlg-m{display:flex;height:462px;flex:none;padding-left:12px}
.grid{display:grid;grid-template-columns:repeat(3,153px);grid-template-rows:repeat(3,153px);width:461px;height:462px;background:#fff;border:1px solid #ccc;border-right:0;flex:none;align-content:start}
.cell{display:flex;align-items:center;justify-content:center;border-right:1px solid #ccc;border-bottom:1px solid #ccc;background:#fff}
.cell.sel{box-shadow:inset 0 0 0 3px #3a7bd5}
.th{width:140px;height:140px;background:#6b91a8}
.thb{fill:#6b91a8}
.gsb{width:10px;background:#555;flex:none}
.pv{width:463px;height:462px;flex:none}
.sy{fill:none;stroke:#dcea3c;stroke-width:2.500}
.sw{fill:none;stroke:#fff;stroke-width:2}
.sk{fill:none;stroke:#111;stroke-width:2.500}
.sd{fill:none;stroke:#333;stroke-width:2}
.sp{fill:none;stroke:#b7c67a;stroke-width:2.500}
.tw{fill:#fff;font:700 24px "Liberation Serif",serif}
.tx{fill:#fff;font:700 18px "Liberation Serif",serif}
.tbt{fill:#2b3a8c;font-family:"Noto Sans CJK SC",sans-serif}
.tbs{fill:#2e3c8e;font:500 60px "Noto Sans CJK SC",serif}
.ta{fill:#fff;font-family:"Liberation Serif",serif}
.tm{fill:#fff;font:38px "Liberation Mono",monospace;letter-spacing:1px}
.tpdf{fill:#fff;font:700 13px "Liberation Sans";text-anchor:middle}
.tiq{fill:#fff;font:700 12px "Liberation Sans";text-anchor:middle}
.pw{fill:none;stroke:#fff;stroke-width:2.500}
.pwd{fill:none;stroke:#fff;stroke-width:2;stroke-dasharray:6 4}
.pt2{fill:#e8e8e8;font:24px "Noto Sans CJK SC",sans-serif}
.pg{fill:#2ed22e;font:24px "Liberation Mono",monospace}
.pl{fill:#fff;font:60px "Liberation Serif",serif}
.pti{fill:#eee;font:54px "Noto Sans CJK SC",sans-serif;letter-spacing:9px}
.pl2{fill:#fff;font:60px "Liberation Serif",serif;letter-spacing:4px}
.dlg-f{display:flex;justify-content:flex-end;gap:6px;padding:6px 12px 0 0}
```
